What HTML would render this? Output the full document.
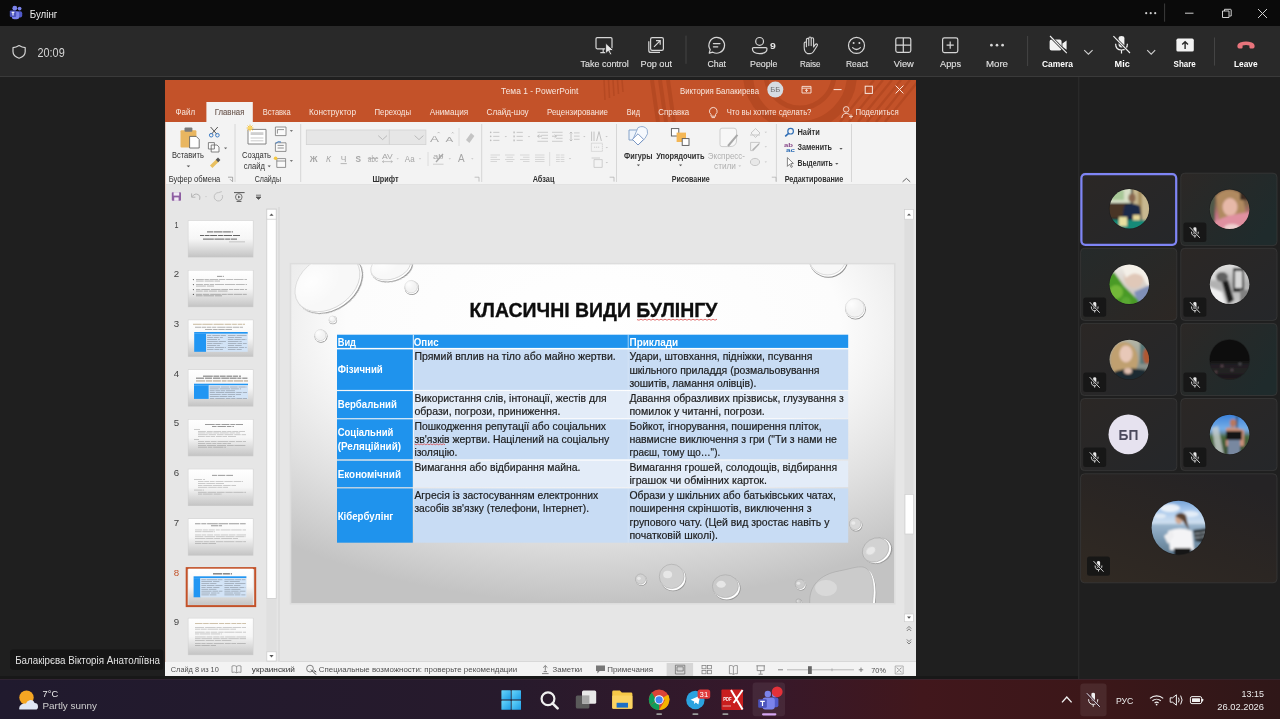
<!DOCTYPE html>
<html><head><meta charset="utf-8"><title>Teams</title>
<style>
html,body{margin:0;padding:0;background:#1f1f1f;width:1280px;height:719px;overflow:hidden}
svg{display:block;will-change:transform;font-family:"Liberation Sans",sans-serif}
</style></head><body>
<svg width="1280" height="719" viewBox="0 0 1280 719">
<defs>
<linearGradient id="tb" x1="0" y1="0" x2="1" y2="0"><stop offset="0" stop-color="#201a2e"/><stop offset="0.4" stop-color="#271a2c"/><stop offset="0.6" stop-color="#37182a"/><stop offset="0.72" stop-color="#41171c"/><stop offset="0.85" stop-color="#3c1719"/><stop offset="1" stop-color="#2f1718"/></linearGradient>
<clipPath id="tbclip"><rect x="165" y="80" width="751" height="42"/></clipPath>
<radialGradient id="slbg" cx="0.5" cy="0.12" r="0.95" fx="0.5" fy="0.1">
<stop offset="0" stop-color="#ffffff"/><stop offset="0.45" stop-color="#fbfbfb"/><stop offset="0.7" stop-color="#e0e0e0"/><stop offset="1" stop-color="#a8a8a8"/></radialGradient>
<linearGradient id="slbg2" x1="0" y1="0" x2="0" y2="1">
<stop offset="0" stop-color="#ffffff"/><stop offset="0.55" stop-color="#fdfdfd"/><stop offset="0.72" stop-color="#ececec"/><stop offset="1" stop-color="#bdbdbd"/></linearGradient>
<radialGradient id="slbg3" cx="0.5" cy="0.18" r="0.82"><stop offset="0" stop-color="#ffffff"/><stop offset="0.5" stop-color="#fcfcfc"/><stop offset="0.76" stop-color="#e0e0e0"/><stop offset="1" stop-color="#c3c3c3"/></radialGradient>
<clipPath id="slclip"><rect x="291.3" y="264.4" width="602.7" height="338.6"/></clipPath>
<radialGradient id="hl" cx="0.32" cy="0.3" r="0.45"><stop offset="0" stop-color="#ffffff" stop-opacity="0.85"/><stop offset="1" stop-color="#ffffff" stop-opacity="0"/></radialGradient>
<filter id="dsh" x="-30%" y="-30%" width="160%" height="160%"><feGaussianBlur stdDeviation="0.7"/></filter>
<linearGradient id="thbg" x1="0" y1="0" x2="0" y2="1">
<stop offset="0" stop-color="#ffffff"/><stop offset="0.5" stop-color="#f6f6f6"/><stop offset="1" stop-color="#c4c4c4"/></linearGradient>
<linearGradient id="tileA" x1="0" y1="0" x2="1" y2="1">
<stop offset="0" stop-color="#2b2725"/><stop offset="1" stop-color="#25272a"/></linearGradient>
<linearGradient id="tileB" x1="0" y1="0" x2="1" y2="0.6">
<stop offset="0" stop-color="#2c2826"/><stop offset="1" stop-color="#1f2b2c"/></linearGradient>
<linearGradient id="tileC" x1="0" y1="0" x2="1" y2="1">
<stop offset="0" stop-color="#252a2a"/><stop offset="1" stop-color="#2c2724"/></linearGradient>
<linearGradient id="tileBig" x1="0" y1="1" x2="0.7" y2="0">
<stop offset="0" stop-color="#312a23"/><stop offset="0.5" stop-color="#2b2623"/><stop offset="1" stop-color="#252325"/></linearGradient>
<filter id="avblur" x="-20%" y="-20%" width="140%" height="140%"><feGaussianBlur stdDeviation="1.0"/></filter>
<clipPath id="cl1"><circle cx="1129.3" cy="208.8" r="19.8"/></clipPath>
<linearGradient id="av1" x1="0" y1="0" x2="0" y2="1"><stop offset="0" stop-color="#3a3228"/><stop offset="0.5" stop-color="#2a241e"/><stop offset="0.8" stop-color="#1a3030"/><stop offset="1" stop-color="#158070"/></linearGradient>
<clipPath id="cl2"><circle cx="1229.6" cy="209.3" r="19.8"/></clipPath>
<linearGradient id="av2" x1="0" y1="0" x2="0" y2="1"><stop offset="0" stop-color="#5a4434"/><stop offset="0.4" stop-color="#8a6a50"/><stop offset="0.62" stop-color="#c07080"/><stop offset="1" stop-color="#e8a0b0"/></linearGradient>
<clipPath id="cl3"><circle cx="1129.3" cy="284.3" r="19.8"/></clipPath>
<linearGradient id="av3" x1="0" y1="0" x2="0" y2="1"><stop offset="0" stop-color="#f0f0ec"/><stop offset="0.5" stop-color="#d8d0c8"/><stop offset="1" stop-color="#b8b8c0"/></linearGradient>
<clipPath id="cl4"><circle cx="1229.6" cy="284.3" r="19.8"/></clipPath>
<linearGradient id="av4" x1="0" y1="0" x2="0" y2="1"><stop offset="0" stop-color="#e8e8e8"/><stop offset="0.5" stop-color="#b0b0b0"/><stop offset="1" stop-color="#d0d0d0"/></linearGradient>
<clipPath id="cl5"><circle cx="1129.3" cy="359.5" r="19.8"/></clipPath>
<linearGradient id="av5" x1="0" y1="0" x2="0" y2="1"><stop offset="0" stop-color="#b8b8a8"/><stop offset="0.5" stop-color="#9aa098"/><stop offset="1" stop-color="#607070"/></linearGradient>
<clipPath id="cl6"><circle cx="1229.6" cy="359.5" r="19.8"/></clipPath>
<linearGradient id="av6" x1="0" y1="0" x2="0" y2="1"><stop offset="0" stop-color="#0c0a0a"/><stop offset="0.55" stop-color="#0e0c0c"/><stop offset="1" stop-color="#241e22"/></linearGradient>
<clipPath id="cl7"><circle cx="1229.6" cy="434.5" r="19.8"/></clipPath>
<linearGradient id="av7" x1="0" y1="0" x2="0" y2="1"><stop offset="0" stop-color="#2f78d8"/><stop offset="0.38" stop-color="#78b0e8"/><stop offset="0.46" stop-color="#6a90b0"/><stop offset="0.55" stop-color="#48683c"/><stop offset="1" stop-color="#3a4a38"/></linearGradient>
<clipPath id="cl8"><circle cx="1178.5" cy="527.7" r="26.9"/></clipPath>
<linearGradient id="av8" x1="0" y1="0" x2="0" y2="1"><stop offset="0" stop-color="#6898d0"/><stop offset="0.2" stop-color="#a8c8ec"/><stop offset="0.42" stop-color="#d0e0f0"/><stop offset="0.455" stop-color="#9ab4cc"/><stop offset="0.7" stop-color="#7a98b0"/><stop offset="1" stop-color="#5a7488"/></linearGradient>
<linearGradient id="winlg" x1="0" y1="0" x2="1" y2="1"><stop offset="0" stop-color="#6ad8fb"/><stop offset="1" stop-color="#1c9ce6"/></linearGradient>
</defs>
<rect x="0" y="0" width="1280.00" height="719.00" fill="#1f1f1f" rx="0" />
<rect x="0" y="0" width="1280.00" height="26.00" fill="#0a0a0a" rx="0" />
<rect x="0" y="26" width="1280.00" height="50.00" fill="#292929" rx="0" />
<rect x="0" y="76" width="1280.00" height="1.00" fill="#3a3a3a" rx="0" />
<circle cx="19.6" cy="8.6" r="1.9" fill="#7b83eb" stroke="none" stroke-width="1" />
<rect x="16.5" y="11.2" width="5.70" height="6.30" fill="#5059c9" rx="2" />
<circle cx="14.8" cy="8.2" r="2.4" fill="#7b83eb" stroke="none" stroke-width="1" />
<rect x="11.8" y="11.2" width="7.40" height="8.00" fill="#7b83eb" rx="2.5" />
<rect x="9.8" y="10.6" width="6.40" height="6.40" fill="#4b53bc" rx="1" />
<path d="M11.6 12.3 H14.4 M13 12.3 V15.6" stroke="#ffffff" fill="none" stroke-width="1.1" />
<text x="29.7" y="18.2" font-size="11.5" fill="#ececec" font-weight="400" textLength="27.7" lengthAdjust="spacingAndGlyphs">Булінг</text>
<circle cx="1146.2" cy="13.2" r="1.1" fill="#cfcfcf" stroke="none" stroke-width="1" />
<circle cx="1150.7" cy="13.2" r="1.1" fill="#cfcfcf" stroke="none" stroke-width="1" />
<circle cx="1155.2" cy="13.2" r="1.1" fill="#cfcfcf" stroke="none" stroke-width="1" />
<line x1="1164.6" y1="3.5" x2="1164.6" y2="21.7" stroke="#3c3c3c" stroke-width="1" />
<line x1="1185" y1="13.2" x2="1193.5" y2="13.2" stroke="#cfcfcf" stroke-width="1" />
<path d="M1222.5 11 h6.5 v6.5 h-6.5 z M1224.5 11 v-1.7 h6 q0.7 0 0.7 0.7 v6 h-1.8" stroke="#cfcfcf" fill="none" stroke-width="1" stroke-linejoin="round"/>
<path d="M1258 9 L1267 18 M1267 9 L1258 18" stroke="#cfcfcf" fill="none" stroke-width="1" />
<path d="M19.1 45.6 C21.3 47.0 23.2 47.6 25.2 47.7 V51.8 C25.2 54.8 23.0 56.9 19.1 58.2 C15.2 56.9 13.0 54.8 13.0 51.8 V47.7 C15.0 47.6 16.9 47.0 19.1 45.6 Z" stroke="#d4d4d4" fill="none" stroke-width="1.2" stroke-linejoin="round"/>
<text x="37.5" y="57.2" font-size="13" fill="#d6d6d6" font-weight="400" textLength="27.2" lengthAdjust="spacingAndGlyphs">20:09</text>
<path d="M597.2 37.6 H610.8 Q612 37.6 612 38.8 V47.6 Q612 48.8 610.8 48.8 H597.2 Q596 48.8 596 47.6 V38.8 Q596 37.6 597.2 37.6 Z" stroke="#d6d6d6" fill="none" stroke-width="1.2" />
<path d="M603.2 48.8 V52.3 M600.3 52.6 H606" stroke="#d6d6d6" fill="none" stroke-width="1.2" />
<path d="M605.6 43.0 V53.8 L608.3 51.3 L610.1 54.9 L611.7 54.1 L609.9 50.6 L613.6 50.4 Z" stroke="#292929" fill="#e8e8e8" stroke-width="0.9" stroke-linejoin="round"/>
<text x="580.6" y="67.1" font-size="9.5" fill="#e0e0e0" font-weight="400" textLength="48.2" lengthAdjust="spacingAndGlyphs" stroke="#e0e0e0" stroke-width="0.12">Take control</text>
<path d="M652.2 37.6 H661.8 Q663.4 37.6 663.4 39.2 V48.8 Q663.4 50.4 661.8 50.4 H652.2 Q650.6 50.4 650.6 48.8 V39.2 Q650.6 37.6 652.2 37.6 Z" stroke="#d6d6d6" fill="none" stroke-width="1.2" />
<path d="M648.8 41.2 V50.4 Q648.8 52.4 650.8 52.4 H660" stroke="#d6d6d6" fill="none" stroke-width="1.2" />
<path d="M654 46.8 L660 40.8 M656 40.6 H660.2 V44.8" stroke="#d6d6d6" fill="none" stroke-width="1.2" />
<text x="640.6" y="67.1" font-size="9.5" fill="#e0e0e0" font-weight="400" textLength="31.4" lengthAdjust="spacingAndGlyphs" stroke="#e0e0e0" stroke-width="0.12">Pop out</text>
<line x1="686" y1="35.6" x2="686" y2="63.8" stroke="#444444" stroke-width="1" />
<path d="M716.6 37.4 A7.9 7.9 0 1 1 712.8 52.2 L709.2 53.2 L710.2 49.6 A7.9 7.9 0 0 1 716.6 37.4 Z" stroke="#d6d6d6" fill="none" stroke-width="1.2" stroke-linejoin="round"/>
<path d="M713.4 43.6 H720 M713.4 46.8 H717.8" stroke="#d6d6d6" fill="none" stroke-width="1.2" stroke-linecap="round"/>
<text x="707.5" y="67.1" font-size="9.5" fill="#e0e0e0" font-weight="400" textLength="18.5" lengthAdjust="spacingAndGlyphs" stroke="#e0e0e0" stroke-width="0.12">Chat</text>
<circle cx="759.6" cy="41.4" r="3.9" fill="none" stroke="#d6d6d6" stroke-width="1.2" />
<path d="M753.6 47.6 H765.8 Q767 47.6 767 48.8 Q767 53.6 759.7 53.6 Q752.4 53.6 752.4 48.8 Q752.4 47.6 753.6 47.6 Z" stroke="#d6d6d6" fill="none" stroke-width="1.2" />
<text x="770.0" y="48.8" font-size="9.6" fill="#e6e6e6" font-weight="700" textLength="5.8" lengthAdjust="spacingAndGlyphs">9</text>
<text x="750.0" y="67.1" font-size="9.5" fill="#e0e0e0" font-weight="400" textLength="27.5" lengthAdjust="spacingAndGlyphs" stroke="#e0e0e0" stroke-width="0.12">People</text>
<path d="M807.4 53.6 C804.8 52.4 804.2 49.6 804.2 47.2 V43.2 Q804.2 42 805.3 42 Q806.4 42 806.4 43.2 V46.8 V39.6 Q806.4 38.4 807.6 38.4 Q808.8 38.4 808.8 39.6 V45.6 V38.2 Q808.8 37 810 37 Q811.2 37 811.2 38.2 V45.6 V39 Q811.2 37.8 812.4 37.8 Q813.6 37.8 813.6 39 V47 L815.2 44.6 Q816.2 43.4 817.2 44.2 Q817.8 44.8 817.2 45.8 L813.4 51.8 Q812.2 53.6 810.2 53.6 Z" stroke="#d6d6d6" fill="none" stroke-width="1.1" stroke-linejoin="round"/>
<text x="800.0" y="67.1" font-size="9.5" fill="#e0e0e0" font-weight="400" textLength="20.6" lengthAdjust="spacingAndGlyphs" stroke="#e0e0e0" stroke-width="0.12">Raise</text>
<circle cx="856.5" cy="45.4" r="8.0" fill="none" stroke="#d6d6d6" stroke-width="1.2" />
<circle cx="853.6" cy="43.0" r="1.0" fill="#d6d6d6" stroke="none" stroke-width="1" />
<circle cx="859.4" cy="43.0" r="1.0" fill="#d6d6d6" stroke="none" stroke-width="1" />
<path d="M852.6 47.6 Q856.5 51.4 860.4 47.6" stroke="#d6d6d6" fill="none" stroke-width="1.2" stroke-linecap="round"/>
<text x="846.0" y="67.1" font-size="9.5" fill="#e0e0e0" font-weight="400" textLength="22.0" lengthAdjust="spacingAndGlyphs" stroke="#e0e0e0" stroke-width="0.12">React</text>
<path d="M897.6 37.8 H909 Q910.8 37.8 910.8 39.6 V50.6 Q910.8 52.4 909 52.4 H897.6 Q895.8 52.4 895.8 50.6 V39.6 Q895.8 37.8 897.6 37.8 Z M903.3 37.8 V52.4 M895.8 45.1 H910.8" stroke="#d6d6d6" fill="none" stroke-width="1.2" />
<text x="893.8" y="67.1" font-size="9.5" fill="#e0e0e0" font-weight="400" textLength="20.0" lengthAdjust="spacingAndGlyphs" stroke="#e0e0e0" stroke-width="0.12">View</text>
<path d="M944.4 37.8 H956 Q957.8 37.8 957.8 39.6 V50.8 Q957.8 52.6 956 52.6 H944.4 Q942.6 52.6 942.6 50.8 V39.6 Q942.6 37.8 944.4 37.8 Z M950.2 41.6 V48.8 M946.6 45.2 H953.8" stroke="#d6d6d6" fill="none" stroke-width="1.2" />
<text x="940.0" y="67.1" font-size="9.5" fill="#e0e0e0" font-weight="400" textLength="21.0" lengthAdjust="spacingAndGlyphs" stroke="#e0e0e0" stroke-width="0.12">Apps</text>
<circle cx="991.4" cy="45.2" r="1.35" fill="#d6d6d6" stroke="none" stroke-width="1" />
<circle cx="997" cy="45.2" r="1.35" fill="#d6d6d6" stroke="none" stroke-width="1" />
<circle cx="1002.6" cy="45.2" r="1.35" fill="#d6d6d6" stroke="none" stroke-width="1" />
<text x="986.0" y="67.1" font-size="9.5" fill="#e0e0e0" font-weight="400" textLength="22.0" lengthAdjust="spacingAndGlyphs" stroke="#e0e0e0" stroke-width="0.12">More</text>
<line x1="1027.6" y1="36" x2="1027.6" y2="66" stroke="#444444" stroke-width="1" />
<path d="M1051.6 39.6 H1059.6 Q1061.6 39.6 1061.6 41.6 V48.6 Q1061.6 50.6 1059.6 50.6 H1051.6 Q1049.6 50.6 1049.6 48.6 V41.6 Q1049.6 39.6 1051.6 39.6 Z M1062.4 43.4 L1066.6 40.4 V49.8 L1062.4 46.8 Z" stroke="none" fill="#f2f2f2" stroke-width="1" />
<line x1="1050" y1="36" x2="1066.8" y2="53.2" stroke="#292929" stroke-width="2.6" />
<line x1="1050" y1="36" x2="1066.8" y2="53.2" stroke="#f2f2f2" stroke-width="1.1" />
<path d="M1084.2 50.2 L1088.4 54.2 L1092.6 50.2" stroke="#cfcfcf" fill="none" stroke-width="1.1" />
<text x="1042.0" y="67.1" font-size="9.5" fill="#ffffff" font-weight="700" textLength="31.0" lengthAdjust="spacingAndGlyphs">Camera</text>
<path d="M1118.6 38.2 Q1118.6 36 1121.5 36 Q1124.4 36 1124.4 38.2 V44.6 Q1124.4 47.4 1121.5 47.4 Q1118.6 47.4 1118.6 44.6 Z" stroke="none" fill="#f2f2f2" stroke-width="1" />
<path d="M1115.6 43.8 Q1115.6 50 1121.5 50 Q1127.4 50 1127.4 43.8 M1121.5 50 V53.4" stroke="#f2f2f2" fill="none" stroke-width="1.2" />
<line x1="1113.4" y1="36.2" x2="1130" y2="53" stroke="#292929" stroke-width="2.6" />
<line x1="1113.4" y1="36.2" x2="1130" y2="53" stroke="#f2f2f2" stroke-width="1.1" />
<path d="M1147.2 50.2 L1151.2 54.2 L1155.2 50.2" stroke="#cfcfcf" fill="none" stroke-width="1.1" />
<text x="1114.6" y="67.1" font-size="9.5" fill="#ffffff" font-weight="700" textLength="15.2" lengthAdjust="spacingAndGlyphs">Mic</text>
<rect x="1176.4" y="38.6" width="17.40" height="13.00" fill="#f2f2f2" rx="1.6" />
<path d="M1185.1 49 V42 M1182.2 44.6 L1185.1 41.7 L1188 44.6" stroke="#292929" fill="none" stroke-width="1.4" />
<text x="1173.6" y="67.1" font-size="9.5" fill="#ffffff" font-weight="700" textLength="22.2" lengthAdjust="spacingAndGlyphs">Share</text>
<line x1="1214.5" y1="37.5" x2="1214.5" y2="65.6" stroke="#444444" stroke-width="1" />
<path d="M1237.4 46.8 Q1237 44 1240.2 42.6 Q1246 40.2 1251.8 42.6 Q1255 44 1254.6 46.8 Q1254.4 48.4 1253 48.6 L1250.6 48.6 Q1249.4 48.4 1249.4 47.2 V45.6 Q1246 44.6 1242.6 45.6 V47.2 Q1242.6 48.4 1241.4 48.6 L1239 48.6 Q1237.6 48.4 1237.4 46.8 Z" stroke="none" fill="#e8747c" stroke-width="1" />
<text x="1234.0" y="67.1" font-size="9.5" fill="#ffffff" font-weight="700" textLength="23.6" lengthAdjust="spacingAndGlyphs">Leave</text>
<line x1="1078.8" y1="77" x2="1078.8" y2="679" stroke="#2e2e2e" stroke-width="1" />
<rect x="0" y="676" width="1078.00" height="3.00" fill="#181818" rx="0" />
<rect x="10" y="649.4" width="153.30" height="20.40" fill="#151515" rx="3" />
<text x="15.2" y="664.4" font-size="11.2" fill="#e2e2e2" font-weight="400" textLength="144.8" lengthAdjust="spacingAndGlyphs">Балакірєва Вікторія Анатоліївна</text>
<rect x="0" y="679" width="1280.00" height="40.00" fill="url(#tb)" rx="0" />
<rect x="0" y="679" width="1280.00" height="1.00" fill="#3a2a35" rx="0" opacity="0.6"/>
<rect x="165" y="80" width="751.00" height="596.00" fill="#e6e6e6" rx="0" />
<rect x="165" y="80" width="751.00" height="42.00" fill="#c35229" rx="0" />
<g clip-path="url(#tbclip)" opacity="0.45" fill="none" stroke="#a63f1a">
<circle cx="800" cy="74" r="52" stroke-width="10"/>
<circle cx="800" cy="74" r="34" stroke-width="5"/>
<line x1="604.0" y1="80" x2="605.0" y2="100" stroke-width="1.6"/>
<line x1="608.5" y1="80" x2="609.5" y2="98" stroke-width="1.6"/>
<line x1="613.0" y1="80" x2="614.0" y2="96" stroke-width="1.6"/>
<line x1="617.5" y1="80" x2="618.5" y2="94" stroke-width="1.6"/>
<line x1="622.0" y1="80" x2="623.0" y2="92" stroke-width="1.6"/>
<line x1="652" y1="80" x2="658" y2="122" stroke-width="4"/>
<line x1="660" y1="80" x2="666" y2="122" stroke-width="4"/>
<line x1="668" y1="80" x2="674" y2="122" stroke-width="4"/>
<line x1="840" y1="122" x2="874" y2="80" stroke-width="2.5"/>
<line x1="849" y1="122" x2="883" y2="80" stroke-width="2.5"/>
<line x1="858" y1="122" x2="892" y2="80" stroke-width="2.5"/>
<line x1="867" y1="122" x2="901" y2="80" stroke-width="2.5"/>
<line x1="876" y1="122" x2="910" y2="80" stroke-width="2.5"/>
<line x1="885" y1="122" x2="919" y2="80" stroke-width="2.5"/>
</g>
<text x="501.0" y="94.0" font-size="9.7" fill="#f8e7df" font-weight="400" textLength="77.4" lengthAdjust="spacingAndGlyphs">Тема 1  -  PowerPoint</text>
<text x="680.0" y="94.0" font-size="9.7" fill="#f8e7df" font-weight="400" textLength="79.0" lengthAdjust="spacingAndGlyphs">Виктория Балакирева</text>
<circle cx="775.3" cy="89.6" r="8" fill="#d6dce2" stroke="none" stroke-width="1" />
<text x="770.2" y="92.2" font-size="6.4" fill="#6e6e6e" font-weight="400" textLength="10.2" lengthAdjust="spacingAndGlyphs">ББ</text>
<path d="M802 86.4 H811 V93 H802 Z M802 88.2 H811 M806.5 92 V89.4 M805 90.8 L806.5 89.4 L808 90.8" stroke="#f8e7df" fill="none" stroke-width="0.9" />
<line x1="833.6" y1="89.6" x2="841.6" y2="89.6" stroke="#f8e7df" stroke-width="1" />
<rect x="865.2" y="86.2" width="7.20" height="7.20" fill="none" rx="0" stroke="#f8e7df" stroke-width="1"/>
<path d="M895.6 85.6 L903.4 93.4 M903.4 85.6 L895.6 93.4" stroke="#f8e7df" fill="none" stroke-width="1" />
<rect x="206.4" y="102" width="46.40" height="20.00" fill="#f3f3f3" rx="0" />
<text x="175.6" y="115.1" font-size="9.3" fill="#f8e7df" font-weight="400" textLength="19.4" lengthAdjust="spacingAndGlyphs">Файл</text>
<text x="262.7" y="115.1" font-size="9.3" fill="#f8e7df" font-weight="400" textLength="28.1" lengthAdjust="spacingAndGlyphs">Вставка</text>
<text x="309.0" y="115.1" font-size="9.3" fill="#f8e7df" font-weight="400" textLength="47.0" lengthAdjust="spacingAndGlyphs">Конструктор</text>
<text x="374.5" y="115.1" font-size="9.3" fill="#f8e7df" font-weight="400" textLength="36.5" lengthAdjust="spacingAndGlyphs">Переходы</text>
<text x="429.8" y="115.1" font-size="9.3" fill="#f8e7df" font-weight="400" textLength="38.5" lengthAdjust="spacingAndGlyphs">Анимация</text>
<text x="486.5" y="115.1" font-size="9.3" fill="#f8e7df" font-weight="400" textLength="42.2" lengthAdjust="spacingAndGlyphs">Слайд-шоу</text>
<text x="547.0" y="115.1" font-size="9.3" fill="#f8e7df" font-weight="400" textLength="61.0" lengthAdjust="spacingAndGlyphs">Рецензирование</text>
<text x="626.7" y="115.1" font-size="9.3" fill="#f8e7df" font-weight="400" textLength="13.3" lengthAdjust="spacingAndGlyphs">Вид</text>
<text x="658.3" y="115.1" font-size="9.3" fill="#f8e7df" font-weight="400" textLength="30.9" lengthAdjust="spacingAndGlyphs">Справка</text>
<text x="726.7" y="115.1" font-size="9.3" fill="#f8e7df" font-weight="400" textLength="84.7" lengthAdjust="spacingAndGlyphs">Что вы хотите сделать?</text>
<text x="855.6" y="115.1" font-size="9.3" fill="#f8e7df" font-weight="400" textLength="43.1" lengthAdjust="spacingAndGlyphs">Поделиться</text>
<text x="214.7" y="115.1" font-size="9.3" fill="#6e5a52" font-weight="400" textLength="29.7" lengthAdjust="spacingAndGlyphs" stroke="#6e5a52" stroke-width="0.15">Главная</text>
<path d="M713.3 107.4 A3.9 3.9 0 0 1 715.6 114.4 V116.2 H711 V114.4 A3.9 3.9 0 0 1 713.3 107.4 Z M711.6 117.6 H715" stroke="#f8e7df" fill="none" stroke-width="0.9" />
<circle cx="846.2" cy="109.4" r="2.8" fill="none" stroke="#f8e7df" stroke-width="0.9" />
<path d="M841.8 118 Q842.4 113.4 846.2 113.4 Q848.4 113.4 849.6 114.8 M849 116.4 H853 M851 114.4 V118.4" stroke="#f8e7df" fill="none" stroke-width="0.9" />
<rect x="165" y="122" width="751.00" height="62.00" fill="#f3f3f3" rx="0" />
<rect x="165" y="184" width="751.00" height="1.00" fill="#e2e2e2" rx="0" />
<line x1="235" y1="124" x2="235" y2="182" stroke="#d6d6d6" stroke-width="1" />
<line x1="300.7" y1="124" x2="300.7" y2="182" stroke="#d6d6d6" stroke-width="1" />
<line x1="481.7" y1="124" x2="481.7" y2="182" stroke="#d6d6d6" stroke-width="1" />
<line x1="616.5" y1="124" x2="616.5" y2="182" stroke="#d6d6d6" stroke-width="1" />
<line x1="776.4" y1="124" x2="776.4" y2="182" stroke="#d6d6d6" stroke-width="1" />
<line x1="851.5" y1="124" x2="851.5" y2="182" stroke="#d6d6d6" stroke-width="1" />
<rect x="180.5" y="130.2" width="15.90" height="17.20" fill="#e9b660" rx="1" />
<rect x="184.5" y="127.6" width="7.90" height="4.20" fill="#7a7a7a" rx="1" />
<path d="M189.6 136.4 H196.2 L199.2 139.4 V148 H189.6 Z" stroke="#555555" fill="#ffffff" stroke-width="0.8" />
<text x="172.0" y="158.4" font-size="8.2" fill="#303030" font-weight="400" textLength="31.8" lengthAdjust="spacingAndGlyphs">Вставить</text>
<path d="M186.6 165.4 L188.4 167.2 L190.2 165.4 Z" stroke="none" fill="#555" stroke-width="1" />
<path d="M210.6 127 L216.8 134.2 M217.8 127 L211.4 134.2" stroke="#555" fill="none" stroke-width="1" />
<circle cx="211.2" cy="135.2" r="1.8" fill="none" stroke="#3b7bc4" stroke-width="1" />
<circle cx="217.4" cy="135.2" r="1.8" fill="none" stroke="#3b7bc4" stroke-width="1" />
<path d="M208.4 142.6 H214.4 V149 H208.4 Z M211.2 145 H217 L219 147 V152 H211.2 Z" stroke="#666" fill="#fbfbfb" stroke-width="0.8" />
<path d="M224 147.6 L225.6 149.2 L227.2 147.6 Z" stroke="none" fill="#666" stroke-width="1" />
<path d="M210 165.6 L216.6 159 L219 161.4 L212.4 168 Z" stroke="none" fill="#e9c060" stroke-width="1" />
<path d="M215.8 159.8 L218 157.6 L220.4 160 L218.2 162.2 Z" stroke="none" fill="#555" stroke-width="1" />
<text x="168.8" y="182.4" font-size="8.2" fill="#303030" font-weight="400" textLength="51.5" lengthAdjust="spacingAndGlyphs">Буфер обмена</text>
<path d="M228 177.2 H232.6 V181.8 M230 179.2 L232.4 181.6" stroke="#888" fill="none" stroke-width="0.7" />
<path d="M248 129.4 H266 V144 H248 Z" stroke="#777" fill="#ffffff" stroke-width="0.9" />
<rect x="250.6" y="132.2" width="12.80" height="2.80" fill="#cfcfcf" rx="0" />
<rect x="250.6" y="137.4" width="12.80" height="1.20" fill="#d2d2d2" rx="0" />
<rect x="250.6" y="140.2" width="12.80" height="1.20" fill="#d2d2d2" rx="0" />
<path d="M250 124.6 V131.4 M246.6 128 H253.4 M247.6 125.6 L252.4 130.4 M252.4 125.6 L247.6 130.4" stroke="#f5c040" fill="none" stroke-width="1" />
<circle cx="250" cy="128" r="1.8" fill="#fbd860" stroke="none" stroke-width="1" />
<text x="242.0" y="158.4" font-size="8.2" fill="#303030" font-weight="400" textLength="29.0" lengthAdjust="spacingAndGlyphs">Создать</text>
<text x="243.8" y="168.8" font-size="8.2" fill="#303030" font-weight="400" textLength="21.2" lengthAdjust="spacingAndGlyphs">слайд</text>
<path d="M267.6 165.6 L269.2 167.2 L270.8 165.6 Z" stroke="none" fill="#555" stroke-width="1" />
<path d="M275.4 127 H286 V135.6 H275.4 Z M277.4 129.6 H284 M277.4 129.6 V133.6" stroke="#777" fill="#fafafa" stroke-width="0.8" />
<path d="M289.8 130.2 L291.4 131.8 L293 130.2 Z" stroke="none" fill="#555" stroke-width="1" />
<path d="M275.4 142.8 H286 V151.4 H275.4 Z M277.6 145.4 H283.8 M277.6 148 H283.8" stroke="#777" fill="#fafafa" stroke-width="0.8" />
<path d="M275.6 143.6 Q278 140.6 281 142" stroke="#3b7bc4" fill="none" stroke-width="1" />
<path d="M276.8 158.6 H285.6 V167.4 H276.8 Z M276.8 161 H285.6" stroke="#777" fill="#fafafa" stroke-width="0.8" />
<circle cx="275.6" cy="158.2" r="1.8" fill="#f5c842" stroke="none" stroke-width="1" />
<path d="M289.8 160.2 L291.4 161.8 L293 160.2 Z" stroke="none" fill="#555" stroke-width="1" />
<text x="254.7" y="182.4" font-size="8.2" fill="#303030" font-weight="400" textLength="26.3" lengthAdjust="spacingAndGlyphs">Слайды</text>
<rect x="306.3" y="130" width="83.00" height="14.60" fill="#e6e6e6" rx="0" stroke="#d2d2d2" stroke-width="0.8"/>
<rect x="389.3" y="130" width="36.60" height="14.60" fill="#e6e6e6" rx="0" stroke="#d2d2d2" stroke-width="0.8"/>
<path d="M378.2 135.6 L382.6 139.6 L387 135.6" stroke="#b4b4b4" fill="none" stroke-width="0.9" />
<path d="M414.6 135.6 L419 139.6 L423.4 135.6" stroke="#b4b4b4" fill="none" stroke-width="0.9" />
<text x="430.0" y="142.0" font-size="9.6" fill="#a6a6a6" font-weight="400" textLength="9.0" lengthAdjust="spacingAndGlyphs">A</text>
<text x="445.6" y="142.0" font-size="7.8" fill="#a6a6a6" font-weight="400" textLength="7.7" lengthAdjust="spacingAndGlyphs">A</text>
<path d="M437.6 133.2 l1 -1.2 l1 1.2 M451.8 133.4 l0.9 -1.1 l0.9 1.1" stroke="#a6a6a6" fill="none" stroke-width="0.6" />
<line x1="459" y1="128" x2="459" y2="146" stroke="#dcdcdc" stroke-width="1" />
<path d="M466 140 L471 133 L474.4 136 L469.4 143 Z" stroke="none" fill="#c4c4c4" stroke-width="1" />
<text x="309.8" y="161.6" font-size="9.6" fill="#a6a6a6" font-weight="700" font-style="normal" textLength="7.800000000000011" lengthAdjust="spacingAndGlyphs">Ж</text>
<text x="326" y="161.6" font-size="9.6" fill="#a6a6a6" font-weight="400" font-style="italic" textLength="5" lengthAdjust="spacingAndGlyphs">К</text>
<text x="340.8" y="161.6" font-size="9.6" fill="#a6a6a6" font-weight="400" font-style="normal" textLength="5.599999999999966" lengthAdjust="spacingAndGlyphs">Ч</text>
<text x="355.5" y="161.6" font-size="9.6" fill="#a6a6a6" font-weight="700" font-style="normal" textLength="5.5" lengthAdjust="spacingAndGlyphs">S</text>
<text x="368" y="161.6" font-size="9.6" fill="#a6a6a6" font-weight="400" font-style="normal" textLength="10" lengthAdjust="spacingAndGlyphs">abc</text>
<text x="404.8" y="161.6" font-size="9.6" fill="#a6a6a6" font-weight="400" font-style="normal" textLength="9.800000000000011" lengthAdjust="spacingAndGlyphs">Aa</text>
<line x1="340.6" y1="163.6" x2="346.8" y2="163.6" stroke="#a6a6a6" stroke-width="0.8" />
<line x1="367.8" y1="158.4" x2="378.2" y2="158.4" stroke="#a6a6a6" stroke-width="0.7" />
<text x="382.0" y="158.6" font-size="7.2" fill="#a6a6a6" font-weight="400" textLength="10.8" lengthAdjust="spacingAndGlyphs">AV</text>
<path d="M382.4 161.6 H392.4 M384 160.4 L382.4 161.6 L384 162.8 M390.8 160.4 L392.4 161.6 L390.8 162.8" stroke="#a6a6a6" fill="none" stroke-width="0.6" />
<path d="M396.5 158.2 L397.7 159.4 L398.9 158.2 Z" stroke="none" fill="#c0c0c0" stroke-width="1" />
<path d="M418.8 158.2 L420 159.4 L421.2 158.2 Z" stroke="none" fill="#c0c0c0" stroke-width="1" />
<path d="M448.6 158.2 L449.8 159.4 L451.0 158.2 Z" stroke="none" fill="#c0c0c0" stroke-width="1" />
<path d="M471.1 158.2 L472.3 159.4 L473.5 158.2 Z" stroke="none" fill="#c0c0c0" stroke-width="1" />
<line x1="428" y1="152" x2="428" y2="166" stroke="#dcdcdc" stroke-width="1" />
<text x="433.0" y="158.6" font-size="7" fill="#a6a6a6" font-weight="400" textLength="10.5" lengthAdjust="spacingAndGlyphs">ab</text>
<path d="M436 162 L443 154" stroke="#a6a6a6" fill="none" stroke-width="1.4" />
<rect x="433" y="163.6" width="10.50" height="1.40" fill="#d8d8d8" rx="0" />
<text x="458.0" y="162.4" font-size="10" fill="#a6a6a6" font-weight="400" textLength="6.6" lengthAdjust="spacingAndGlyphs">A</text>
<text x="372.4" y="181.9" font-size="8.2" fill="#303030" font-weight="700" textLength="26.1" lengthAdjust="spacingAndGlyphs">Шрифт</text>
<path d="M474.6 177.2 H479 V181.6" stroke="#aaa" fill="none" stroke-width="0.7" />
<circle cx="490.7" cy="132.4" r="0.8" fill="#bdbdbd" stroke="none" stroke-width="1" />
<rect x="493.2" y="131.8" width="6.20" height="1.20" fill="#cfcfcf" rx="0" />
<circle cx="490.7" cy="136.4" r="0.8" fill="#bdbdbd" stroke="none" stroke-width="1" />
<rect x="493.2" y="135.8" width="6.20" height="1.20" fill="#cfcfcf" rx="0" />
<circle cx="490.7" cy="140.4" r="0.8" fill="#bdbdbd" stroke="none" stroke-width="1" />
<rect x="493.2" y="139.8" width="6.20" height="1.20" fill="#cfcfcf" rx="0" />
<rect x="513.4" y="131.5" width="1.40" height="1.80" fill="#bdbdbd" rx="0" />
<rect x="516.6" y="131.8" width="6.20" height="1.20" fill="#cfcfcf" rx="0" />
<rect x="513.4" y="135.5" width="1.40" height="1.80" fill="#bdbdbd" rx="0" />
<rect x="516.6" y="135.8" width="6.20" height="1.20" fill="#cfcfcf" rx="0" />
<rect x="513.4" y="139.5" width="1.40" height="1.80" fill="#bdbdbd" rx="0" />
<rect x="516.6" y="139.8" width="6.20" height="1.20" fill="#cfcfcf" rx="0" />
<path d="M504.6 136 L505.8 137.2 L507.0 136 Z" stroke="none" fill="#c4c4c4" stroke-width="1" />
<path d="M527.8 136 L529 137.2 L530.2 136 Z" stroke="none" fill="#c4c4c4" stroke-width="1" />
<path d="M583.0999999999999 136 L584.3 137.2 L585.5 136 Z" stroke="none" fill="#c4c4c4" stroke-width="1" />
<path d="M605.4 136 L606.6 137.2 L607.8000000000001 136 Z" stroke="none" fill="#c4c4c4" stroke-width="1" />
<rect x="537.4" y="131.8" width="10.60" height="1.00" fill="#cdcdcd" rx="0" />
<rect x="541.4" y="134.8" width="6.60" height="1.00" fill="#cdcdcd" rx="0" />
<rect x="541.4" y="137.8" width="6.60" height="1.00" fill="#cdcdcd" rx="0" />
<rect x="537.4" y="140.8" width="10.60" height="1.00" fill="#cdcdcd" rx="0" />
<rect x="552" y="131.8" width="10.60" height="1.00" fill="#cdcdcd" rx="0" />
<rect x="556" y="134.8" width="6.60" height="1.00" fill="#cdcdcd" rx="0" />
<rect x="556" y="137.8" width="6.60" height="1.00" fill="#cdcdcd" rx="0" />
<rect x="552" y="140.8" width="10.60" height="1.00" fill="#cdcdcd" rx="0" />
<path d="M542 136.2 L537.6 136.2 M539.4 134.6 L537.6 136.2 L539.4 137.8" stroke="#b8b8b8" fill="none" stroke-width="0.8" />
<path d="M552 136.2 L556.4 136.2 M554.6 134.6 L556.4 136.2 L554.6 137.8" stroke="#b8b8b8" fill="none" stroke-width="0.8" />
<path d="M571 132 V141 M569.6 133.4 L571 132 L572.4 133.4 M569.6 139.6 L571 141 L572.4 139.6" stroke="#b8b8b8" fill="none" stroke-width="0.8" />
<rect x="574" y="132.4" width="5.60" height="1.00" fill="#cdcdcd" rx="0" />
<rect x="574" y="135.6" width="5.60" height="1.00" fill="#cdcdcd" rx="0" />
<rect x="574" y="138.8" width="5.60" height="1.00" fill="#cdcdcd" rx="0" />
<path d="M591.6 141 V131.6 M594 141 V131.6 M596.6 141 L599 131.6 L601.4 141" stroke="#bdbdbd" fill="none" stroke-width="0.9" />
<rect x="490.5" y="154.6" width="9.50" height="0.80" fill="#d0d0d0" rx="0" />
<rect x="490.5" y="156.79999999999998" width="6.50" height="0.80" fill="#d0d0d0" rx="0" />
<rect x="490.5" y="159.0" width="9.50" height="0.80" fill="#d0d0d0" rx="0" />
<rect x="490.5" y="161.2" width="6.50" height="0.80" fill="#d0d0d0" rx="0" />
<rect x="505.0" y="154.6" width="9.50" height="0.80" fill="#d0d0d0" rx="0" />
<rect x="506.5" y="156.79999999999998" width="6.50" height="0.80" fill="#d0d0d0" rx="0" />
<rect x="505.0" y="159.0" width="9.50" height="0.80" fill="#d0d0d0" rx="0" />
<rect x="506.5" y="161.2" width="6.50" height="0.80" fill="#d0d0d0" rx="0" />
<rect x="520.0" y="154.6" width="9.50" height="0.80" fill="#d0d0d0" rx="0" />
<rect x="523.0" y="156.79999999999998" width="6.50" height="0.80" fill="#d0d0d0" rx="0" />
<rect x="520.0" y="159.0" width="9.50" height="0.80" fill="#d0d0d0" rx="0" />
<rect x="523.0" y="161.2" width="6.50" height="0.80" fill="#d0d0d0" rx="0" />
<rect x="535" y="154.6" width="9.50" height="0.80" fill="#d0d0d0" rx="0" />
<rect x="535" y="156.79999999999998" width="9.50" height="0.80" fill="#d0d0d0" rx="0" />
<rect x="535" y="159.0" width="9.50" height="0.80" fill="#d0d0d0" rx="0" />
<rect x="535" y="161.2" width="9.50" height="0.80" fill="#d0d0d0" rx="0" />
<line x1="549.7" y1="152" x2="549.7" y2="166" stroke="#dcdcdc" stroke-width="1" />
<rect x="556.0" y="154.6" width="3.80" height="0.80" fill="#d0d0d0" rx="0" />
<rect x="556.0" y="156.79999999999998" width="3.80" height="0.80" fill="#d0d0d0" rx="0" />
<rect x="556.0" y="159.0" width="3.80" height="0.80" fill="#d0d0d0" rx="0" />
<rect x="556.0" y="161.2" width="3.80" height="0.80" fill="#d0d0d0" rx="0" />
<rect x="560.6" y="154.6" width="3.80" height="0.80" fill="#d0d0d0" rx="0" />
<rect x="560.6" y="156.79999999999998" width="3.80" height="0.80" fill="#d0d0d0" rx="0" />
<rect x="560.6" y="159.0" width="3.80" height="0.80" fill="#d0d0d0" rx="0" />
<rect x="560.6" y="161.2" width="3.80" height="0.80" fill="#d0d0d0" rx="0" />
<path d="M568.8 158 L570 159.2 L571.2 158 Z" stroke="none" fill="#c4c4c4" stroke-width="1" />
<path d="M591.4 143.2 H602.4 V151.4 H591.4 Z M594 147.2 H600" stroke="#c4c4c4" fill="none" stroke-width="0.8" stroke-dasharray="1.2 0.8"/>
<path d="M605.6 147 L606.8 148.2 L608 147 Z" stroke="none" fill="#c4c4c4" stroke-width="1" />
<path d="M594 159.6 H602.2 V167.4 H594 Z M591.6 158 H600" stroke="#c4c4c4" fill="none" stroke-width="0.8" />
<path d="M605.6 162 L606.8 163.2 L608 162 Z" stroke="none" fill="#c4c4c4" stroke-width="1" />
<text x="532.7" y="182.0" font-size="8.2" fill="#303030" font-weight="700" textLength="21.7" lengthAdjust="spacingAndGlyphs">Абзац</text>
<path d="M609.6 177.2 H614 V181.6" stroke="#aaa" fill="none" stroke-width="0.7" />
<path d="M629 130 L638.4 130 L638.4 140 L629 140 Z" stroke="#7b9bc4" fill="#eef4fb" stroke-width="0.9" />
<path d="M638 127.6 Q643.6 124.8 647.2 129.4 Q649 133.6 645 138.4 L638 145 L632.8 139.8 Z" stroke="#8aa6cc" fill="#f6f9fd" stroke-width="0.9" />
<path d="M638 133.8 L643.6 139.4 L638 145 L632.4 139.4 Z" stroke="#6f8fbf" fill="#ffffff" stroke-width="0.9" />
<text x="624.0" y="158.8" font-size="8.2" fill="#303030" font-weight="700" textLength="28.4" lengthAdjust="spacingAndGlyphs">Фигуры</text>
<path d="M636.8 164.6 L638.4 166.2 L640 164.6 Z" stroke="none" fill="#555" stroke-width="1" />
<rect x="671.4" y="128.6" width="7.40" height="7.40" fill="#ffffff" rx="0" stroke="#555" stroke-width="0.9"/>
<rect x="676.6" y="132.6" width="9.40" height="9.40" fill="#f4b755" rx="0" />
<rect x="682.2" y="138.6" width="6.80" height="6.80" fill="#ffffff" rx="0" stroke="#555" stroke-width="0.9"/>
<text x="656.2" y="158.8" font-size="8.2" fill="#303030" font-weight="700" textLength="48.4" lengthAdjust="spacingAndGlyphs">Упорядочить</text>
<path d="M679 164.6 L680.6 166.2 L682.2 164.6 Z" stroke="none" fill="#555" stroke-width="1" />
<path d="M720 130 Q720 128.2 722 128.2 H734 Q736.6 128.2 736.6 131 V140 Q736.6 146.6 730 146.6 H722 Q720 146.6 720 144.6 Z" stroke="#c8c8c8" fill="#f7f7f7" stroke-width="0.9" />
<path d="M728 146 L737.4 134.8" stroke="#a8a8a8" fill="none" stroke-width="2" />
<text x="707.8" y="158.8" font-size="8.2" fill="#b0b0b0" font-weight="400" textLength="37.2" lengthAdjust="spacingAndGlyphs">Экспресс-</text>
<text x="714.0" y="169.2" font-size="8.2" fill="#b0b0b0" font-weight="400" textLength="22.0" lengthAdjust="spacingAndGlyphs">стили</text>
<path d="M738.4 165.4 L739.8 166.8 L741.2 165.4 Z" stroke="none" fill="#bbb" stroke-width="1" />
<path d="M751 133 L755.6 128.6 L760 133 L755.6 137.4 Z" stroke="#bdbdbd" fill="#f4f4f4" stroke-width="0.8" />
<rect x="750" y="134.4" width="10.00" height="1.20" fill="#d0d0d0" rx="0" />
<path d="M750.6 142.4 H759.6 L759.6 143 L753.4 150.6 H750.6 Z" stroke="#bdbdbd" fill="none" stroke-width="0.8" />
<path d="M752.6 150 L759 144" stroke="#b0b0b0" fill="none" stroke-width="1.2" />
<ellipse cx="755" cy="162" rx="4.6" ry="3.6" fill="#e8e8e8" stroke="#bdbdbd" stroke-width="0.8"/>
<path d="M764.6 131.8 L765.8 133.0 L767 131.8 Z" stroke="none" fill="#c4c4c4" stroke-width="1" />
<path d="M764.6 146.20000000000002 L765.8 147.4 L767 146.20000000000002 Z" stroke="none" fill="#c4c4c4" stroke-width="1" />
<path d="M764.6 161.6 L765.8 162.79999999999998 L767 161.6 Z" stroke="none" fill="#c4c4c4" stroke-width="1" />
<text x="671.7" y="181.9" font-size="8.2" fill="#303030" font-weight="700" textLength="38.0" lengthAdjust="spacingAndGlyphs">Рисование</text>
<path d="M771.8 177.2 H776 V181.6" stroke="#aaa" fill="none" stroke-width="0.7" />
<circle cx="790.6" cy="131.2" r="2.8" fill="none" stroke="#2f6eb5" stroke-width="1.2" />
<line x1="788.6" y1="133.4" x2="785.2" y2="136.4" stroke="#2f6eb5" stroke-width="1.6" />
<text x="797.5" y="135.4" font-size="8.2" fill="#303030" font-weight="700" textLength="22.3" lengthAdjust="spacingAndGlyphs">Найти</text>
<text x="784.0" y="146.6" font-size="6" fill="#8a4a8a" font-weight="700" textLength="9.0" lengthAdjust="spacingAndGlyphs">ab</text>
<text x="786.0" y="151.6" font-size="6" fill="#2f6eb5" font-weight="700" textLength="9.0" lengthAdjust="spacingAndGlyphs">ac</text>
<text x="797.5" y="150.4" font-size="8.2" fill="#303030" font-weight="700" textLength="34.5" lengthAdjust="spacingAndGlyphs">Заменить</text>
<path d="M839.4 148.0 L841 149.8 L842.6 148.0 Z" stroke="none" fill="#555" stroke-width="1" />
<path d="M787.4 157.6 L787.4 166.4 L789.6 164.2 L791.2 167.4 L792.4 166.8 L790.8 163.6 L793.4 163.4 Z" stroke="#555" fill="#ffffff" stroke-width="0.7" />
<text x="797.5" y="165.8" font-size="8.2" fill="#303030" font-weight="700" textLength="35.2" lengthAdjust="spacingAndGlyphs">Выделить</text>
<path d="M835.2 163.0 L836.8 164.8 L838.4 163.0 Z" stroke="none" fill="#555" stroke-width="1" />
<text x="784.7" y="181.6" font-size="8.2" fill="#303030" font-weight="700" textLength="58.6" lengthAdjust="spacingAndGlyphs">Редактирование</text>
<path d="M902.6 181.8 L906.4 178.4 L910.2 181.8" stroke="#555" fill="none" stroke-width="0.9" />
<rect x="165" y="185" width="751.00" height="22.00" fill="#e6e6e6" rx="0" />
<rect x="171.8" y="192.2" width="9.20" height="8.60" fill="#8e5ea2" rx="0.8" />
<rect x="173.6" y="192.2" width="5.60" height="3.40" fill="#f0eaf4" rx="0" />
<rect x="174.2" y="197.4" width="4.40" height="3.40" fill="#f0eaf4" rx="0" />
<path d="M192 196.8 Q194.8 192.6 198.6 194.8 Q200.8 196.4 199.6 199.8 M191.6 193.4 V197.2 H195.4" stroke="#b4b4b4" fill="none" stroke-width="1" />
<path d="M205 196.2 L206 197.2 L207 196.2 Z" stroke="none" fill="#c0c0c0" stroke-width="1" />
<path d="M222.2 195 A4.2 4.2 0 1 1 218.6 192.6 M218.6 192.6 L221.8 191.6" stroke="#c0c0c0" fill="none" stroke-width="1" />
<line x1="234" y1="192.6" x2="244.6" y2="192.6" stroke="#555" stroke-width="1" />
<circle cx="238.8" cy="197" r="3.3" fill="none" stroke="#666" stroke-width="0.9" />
<path d="M238 195.6 L240.6 197 L238 198.4 Z" stroke="none" fill="#666" stroke-width="1" />
<line x1="236.6" y1="201.4" x2="241.4" y2="201.4" stroke="#555" stroke-width="1" />
<path d="M256 195.2 H261 M256 197 L258.5 199.4 L261 197 Z" stroke="#555" fill="#555" stroke-width="0.8" />
<line x1="165.5" y1="122" x2="165.5" y2="676" stroke="#e6c8bc" stroke-width="1" />
<rect x="266.3" y="208.8" width="10.40" height="453.20" fill="#e0e0e0" rx="0" />
<rect x="266.8" y="209.2" width="9.40" height="389.20" fill="#ffffff" rx="0" stroke="#cfcfcf" stroke-width="0.8"/>
<rect x="266.8" y="209.2" width="9.40" height="10.00" fill="#ffffff" rx="0" stroke="#cfcfcf" stroke-width="0.8"/>
<path d="M269.4 215.8 L271.5 213.4 L273.6 215.8 Z" stroke="none" fill="#555" stroke-width="1" />
<rect x="266.8" y="651.8" width="9.40" height="9.20" fill="#ffffff" rx="0" stroke="#cfcfcf" stroke-width="0.8"/>
<path d="M269.4 655 L271.5 657.4 L273.6 655 Z" stroke="none" fill="#555" stroke-width="1" />
<line x1="279" y1="207" x2="279" y2="662" stroke="#d4d4d4" stroke-width="1" />
<rect x="165" y="662" width="751.00" height="14.00" fill="#f3f3f3" rx="0" />
<line x1="280" y1="661.5" x2="916" y2="661.5" stroke="#d8d8d8" stroke-width="1" />
<text x="170.8" y="672.0" font-size="7.6" fill="#505050" font-weight="400" textLength="48.0" lengthAdjust="spacingAndGlyphs">Слайд 8 из 10</text>
<path d="M232 666 Q234.4 665 236.6 666.4 Q238.8 665 241 666 V672.4 Q238.8 671.6 236.6 672.8 Q234.4 671.6 232 672.4 Z M236.6 666.4 V672.8" stroke="#777" fill="none" stroke-width="0.7" />
<text x="251.8" y="672.0" font-size="7.6" fill="#333" font-weight="400" textLength="43.1" lengthAdjust="spacingAndGlyphs">украинский</text>
<circle cx="310" cy="668.6" r="3.4" fill="none" stroke="#666" stroke-width="0.8" />
<path d="M311 669.6 L316 674.6 M314 670.6 L316.2 672" stroke="#444" fill="none" stroke-width="1" />
<text x="318.8" y="672.0" font-size="7.6" fill="#505050" font-weight="400" textLength="198.4" lengthAdjust="spacingAndGlyphs">Специальные возможности: проверьте рекомендации</text>
<path d="M542 673.6 H548.6 M543.6 671.6 H547 M545.3 670.6 V665.6 M543.2 667.6 L545.3 665.6 L547.4 667.6" stroke="#777" fill="none" stroke-width="0.9" />
<text x="552.5" y="672.0" font-size="7.6" fill="#505050" font-weight="400" textLength="29.7" lengthAdjust="spacingAndGlyphs">Заметки</text>
<path d="M596 665.6 H605 V671 H599.6 L597.4 673.6 V671 H596 Z" stroke="none" fill="#777" stroke-width="1" />
<text x="607.2" y="672.0" font-size="7.6" fill="#505050" font-weight="400" textLength="45.9" lengthAdjust="spacingAndGlyphs">Примечания</text>
<rect x="666.6" y="663" width="26.50" height="13.00" fill="#d6d6d6" rx="0" />
<path d="M675.4 665.2 H684.8 V674 H675.4 Z M677 666.8 H683.2 V671 H677 Z" stroke="#666" fill="none" stroke-width="0.7" />
<rect x="702" y="665.4" width="4.00" height="3.40" fill="none" rx="0" stroke="#777" stroke-width="0.7"/>
<rect x="707.6" y="665.4" width="4.00" height="3.40" fill="none" rx="0" stroke="#777" stroke-width="0.7"/>
<rect x="702" y="670.4" width="4.00" height="3.40" fill="none" rx="0" stroke="#777" stroke-width="0.7"/>
<rect x="707.6" y="670.4" width="4.00" height="3.40" fill="none" rx="0" stroke="#777" stroke-width="0.7"/>
<path d="M729.4 665.6 Q731.6 665 733.4 666.4 Q735.2 665 737.4 665.6 V673.8 Q735.2 673.2 733.4 674.4 Q731.6 673.2 729.4 673.8 Z M733.4 666.4 V674.4" stroke="#777" fill="none" stroke-width="0.7" />
<path d="M756.4 665.8 H765 M757.2 665.8 V670.6 H764.2 V665.8 M760.7 670.6 V673.8 M758.6 674.2 H762.8" stroke="#777" fill="none" stroke-width="0.8" />
<line x1="778" y1="669.8" x2="783" y2="669.8" stroke="#777" stroke-width="0.9" />
<line x1="787" y1="669.8" x2="854" y2="669.8" stroke="#aaa" stroke-width="0.8" />
<rect x="808" y="666.2" width="3.80" height="7.80" fill="#666" rx="0" />
<line x1="832" y1="668.4" x2="832" y2="671.2" stroke="#999" stroke-width="0.7" />
<path d="M858.8 669.8 H863.2 M861 667.6 V672" stroke="#777" fill="none" stroke-width="0.9" />
<text x="871.3" y="672.9" font-size="7.8" fill="#505050" font-weight="400" textLength="14.6" lengthAdjust="spacingAndGlyphs">70%</text>
<path d="M895.2 666 H903.2 V674 H895.2 Z" stroke="#999" fill="none" stroke-width="0.7" />
<path d="M896.8 667.6 L898.8 669.6 M901.6 667.6 L899.6 669.6 M896.8 672.4 L898.8 670.4 M901.6 672.4 L899.6 670.4" stroke="#777" fill="none" stroke-width="0.8" />
<rect x="904.3" y="209.2" width="9.40" height="404.80" fill="#dedede" rx="0" />
<rect x="904.6" y="209.4" width="8.80" height="9.80" fill="#ffffff" rx="0" stroke="#cfcfcf" stroke-width="0.7"/>
<path d="M907 215.6 L909 213.4 L911 215.6 Z" stroke="none" fill="#555" stroke-width="1" />
<rect x="905" y="494.5" width="8.60" height="39.50" fill="#ffffff" rx="0" stroke="#cfcfcf" stroke-width="0.7"/>
<rect x="904.6" y="614" width="8.80" height="7.70" fill="#ffffff" rx="0" stroke="#cfcfcf" stroke-width="0.7"/>
<path d="M907 616.6 L909 618.8 L911 616.6 Z" stroke="none" fill="#555" stroke-width="1" />
<path d="M906.8 628.6 L909 626.4 L911.2 628.6 M906.8 631 L909 628.8 L911.2 631 M906.8 639.4 L909 641.6 L911.2 639.4 M906.8 641.8 L909 644 L911.2 641.8" stroke="#666" fill="none" stroke-width="0.8" />
<rect x="289.8" y="262.9" width="605.70" height="341.60" fill="#d8d8d8" rx="0" opacity="0.7"/>
<rect x="291.3" y="264.4" width="602.70" height="338.60" fill="url(#slbg3)" rx="0" />
<g clip-path="url(#slclip)">
<g transform="rotate(-35 328 283)">
<ellipse cx="328.96" cy="284.60" rx="36.3" ry="26.3" fill="#6e6e6e" opacity="0.75" filter="url(#dsh)"/>
<ellipse cx="328.48" cy="283.80" rx="36" ry="26" fill="#ffffff"/>
<ellipse cx="327.76" cy="282.52" rx="35.4" ry="25.3" fill="#f8f8f8" stroke="#c4c4c4" stroke-width="0.6"/>
<ellipse cx="328" cy="283" rx="36" ry="26" fill="url(#hl)"/>
</g>
<g transform="rotate(-18 391 266.5)">
<ellipse cx="391.86" cy="267.94" rx="21.3" ry="13.9" fill="#6e6e6e" opacity="0.75" filter="url(#dsh)"/>
<ellipse cx="391.43" cy="267.22" rx="21" ry="13.6" fill="#ffffff"/>
<ellipse cx="390.78" cy="266.07" rx="20.4" ry="12.9" fill="#f8f8f8" stroke="#c4c4c4" stroke-width="0.6"/>
<ellipse cx="391" cy="266.5" rx="21" ry="13.6" fill="url(#hl)"/>
</g>
<g>
<ellipse cx="411.83" cy="287.88" rx="7.2" ry="7.2" fill="#6e6e6e" opacity="0.75" filter="url(#dsh)"/>
<ellipse cx="411.56" cy="287.44" rx="6.9" ry="6.9" fill="#ffffff"/>
<ellipse cx="411.17" cy="286.74" rx="6.300000000000001" ry="6.2" fill="#f2f2f2" stroke="#c4c4c4" stroke-width="0.6"/>
<ellipse cx="411.3" cy="287" rx="6.9" ry="6.9" fill="url(#hl)"/>
</g>
<g>
<ellipse cx="332.95" cy="320.15" rx="4.1" ry="4.1" fill="#8a8a8a" opacity="0.75" filter="url(#dsh)"/>
<ellipse cx="332.73" cy="319.78" rx="3.8" ry="3.8" fill="#ffffff"/>
<ellipse cx="332.39" cy="319.17" rx="3.1999999999999997" ry="3.0999999999999996" fill="#f2f2f2" stroke="#c4c4c4" stroke-width="0.6"/>
<ellipse cx="332.5" cy="319.4" rx="3.8" ry="3.8" fill="url(#hl)"/>
</g>
<g>
<ellipse cx="321.01" cy="336.25" rx="6.5" ry="6.5" fill="#6e6e6e" opacity="0.75" filter="url(#dsh)"/>
<ellipse cx="320.75" cy="335.82" rx="6.2" ry="6.2" fill="#ffffff"/>
<ellipse cx="320.37" cy="335.15" rx="5.6000000000000005" ry="5.5" fill="#f2f2f2" stroke="#c4c4c4" stroke-width="0.6"/>
<ellipse cx="320.5" cy="335.4" rx="6.2" ry="6.2" fill="url(#hl)"/>
</g>
<g>
<ellipse cx="828.53" cy="257.79" rx="20.0" ry="20.0" fill="#6e6e6e" opacity="0.75" filter="url(#dsh)"/>
<ellipse cx="828.12" cy="257.09" rx="19.7" ry="19.7" fill="#ffffff"/>
<ellipse cx="827.49" cy="255.98" rx="19.099999999999998" ry="19.0" fill="#f7f7f7" stroke="#c4c4c4" stroke-width="0.6"/>
<ellipse cx="827.7" cy="256.4" rx="19.7" ry="19.7" fill="url(#hl)"/>
</g>
<g>
<ellipse cx="855.60" cy="309.20" rx="10.3" ry="10.3" fill="#6e6e6e" opacity="0.75" filter="url(#dsh)"/>
<ellipse cx="855.30" cy="308.70" rx="10" ry="10" fill="#ffffff"/>
<ellipse cx="854.85" cy="307.90" rx="9.4" ry="9.3" fill="#f3f3f3" stroke="#c4c4c4" stroke-width="0.6"/>
<ellipse cx="855" cy="308.2" rx="10" ry="10" fill="url(#hl)"/>
</g>
<g>
<ellipse cx="856.18" cy="525.24" rx="6.3" ry="6.3" fill="#6c6c6c" opacity="0.55" filter="url(#dsh)"/>
<ellipse cx="855.92" cy="524.85" rx="6" ry="6" fill="#ffffff"/>
<ellipse cx="855.14" cy="523.88" rx="5.80" ry="5.80" fill="#d8d8d8" stroke="#a0a0a0" stroke-width="0.5"/>
<ellipse cx="853.30" cy="523.00" rx="2.10" ry="1.80" fill="#f2f2f2" opacity="0.7" filter="url(#dsh)"/>
</g>
<g transform="rotate(-32 876.2 550.2)">
<ellipse cx="877.47" cy="551.90" rx="14.5" ry="12.100000000000001" fill="#6c6c6c" opacity="0.55" filter="url(#dsh)"/>
<ellipse cx="877.05" cy="551.26" rx="14.2" ry="11.8" fill="#ffffff"/>
<ellipse cx="875.78" cy="549.67" rx="13.88" ry="11.48" fill="#d2d2d2" stroke="#a0a0a0" stroke-width="0.5"/>
<ellipse cx="871.23" cy="547.84" rx="4.97" ry="3.54" fill="#f2f2f2" opacity="0.7" filter="url(#dsh)"/>
</g>
<g>
<ellipse cx="641.54" cy="580.38" rx="5.6" ry="5.6" fill="#6c6c6c" opacity="0.55" filter="url(#dsh)"/>
<ellipse cx="641.29" cy="580.01" rx="5.3" ry="5.3" fill="#ffffff"/>
<ellipse cx="640.55" cy="579.09" rx="5.12" ry="5.12" fill="#d2d2d2" stroke="#a0a0a0" stroke-width="0.5"/>
<ellipse cx="638.94" cy="578.34" rx="1.85" ry="1.59" fill="#f2f2f2" opacity="0.7" filter="url(#dsh)"/>
</g>
<g>
<ellipse cx="673.28" cy="578.48" rx="13.0" ry="12.8" fill="#6c6c6c" opacity="0.55" filter="url(#dsh)"/>
<ellipse cx="672.89" cy="577.88" rx="12.7" ry="12.5" fill="#ffffff"/>
<ellipse cx="671.71" cy="576.41" rx="12.40" ry="12.20" fill="#d0d0d0" stroke="#a0a0a0" stroke-width="0.5"/>
<ellipse cx="667.65" cy="574.40" rx="4.44" ry="3.75" fill="#f2f2f2" opacity="0.7" filter="url(#dsh)"/>
</g>
<g>
<ellipse cx="727.02" cy="588.32" rx="13.600000000000001" ry="12.0" fill="#6c6c6c" opacity="0.55" filter="url(#dsh)"/>
<ellipse cx="726.61" cy="587.72" rx="13.3" ry="11.7" fill="#ffffff"/>
<ellipse cx="725.39" cy="586.19" rx="13.00" ry="11.40" fill="#cacaca" stroke="#a0a0a0" stroke-width="0.5"/>
<ellipse cx="721.14" cy="584.36" rx="4.66" ry="3.51" fill="#f2f2f2" opacity="0.7" filter="url(#dsh)"/>
</g>
<g>
<ellipse cx="800.92" cy="585.26" rx="5.3" ry="5.3" fill="#6c6c6c" opacity="0.55" filter="url(#dsh)"/>
<ellipse cx="800.68" cy="584.90" rx="5.0" ry="5.0" fill="#ffffff"/>
<ellipse cx="799.96" cy="584.00" rx="4.82" ry="4.82" fill="#cccccc" stroke="#a0a0a0" stroke-width="0.5"/>
<ellipse cx="798.45" cy="583.30" rx="1.75" ry="1.50" fill="#f2f2f2" opacity="0.7" filter="url(#dsh)"/>
</g>
<g>
<ellipse cx="799.18" cy="602.27" rx="2.9" ry="2.9" fill="#6c6c6c" opacity="0.55" filter="url(#dsh)"/>
<ellipse cx="798.98" cy="601.98" rx="2.6" ry="2.6" fill="#ffffff"/>
<ellipse cx="798.41" cy="601.26" rx="2.46" ry="2.46" fill="#c8c8c8" stroke="#a0a0a0" stroke-width="0.5"/>
<ellipse cx="797.69" cy="600.98" rx="0.91" ry="0.78" fill="#f2f2f2" opacity="0.7" filter="url(#dsh)"/>
</g>
<path d="M810.5 606 C808.5 586 821 575 840 571.5 C851 569.5 857 566.8 863.5 567.6 C873.5 569.5 876 588 872.6 606 Z" fill="#6c6c6c" opacity="0.55" filter="url(#dsh)" transform="translate(2.2 2.2)"/>
<path d="M810.5 606 C808.5 586 821 575 840 571.5 C851 569.5 857 566.8 863.5 567.6 C873.5 569.5 876 588 872.6 606 Z" fill="#ffffff" transform="translate(1.6 1.2)"/>
<path d="M810.5 606 C808.5 586 821 575 840 571.5 C851 569.5 857 566.8 863.5 567.6 C873.5 569.5 876 588 872.6 606 Z" fill="#cbcbcb" stroke="#a0a0a0" stroke-width="0.5" transform="translate(-0.6 -0.6)"/>
<ellipse cx="826" cy="588" rx="11" ry="8" fill="#e8e8e8" opacity="0.5" filter="url(#dsh)"/>
</g>
<text x="469.4" y="317.3" font-size="20.4" fill="#0d0d0d" font-weight="700" textLength="248.0" lengthAdjust="spacingAndGlyphs" stroke="#0d0d0d" stroke-width="0.35">КЛАСИЧНІ ВИДИ БУЛІНГУ</text>
<path d="M637 319.6 L639 320.20000000000005 L641 319.20000000000005 L643 320.20000000000005 L645 319.20000000000005 L647 320.20000000000005 L649 319.20000000000005 L651 320.20000000000005 L653 319.20000000000005 L655 320.20000000000005 L657 319.20000000000005 L659 320.20000000000005 L661 319.20000000000005 L663 320.20000000000005 L665 319.20000000000005 L667 320.20000000000005 L669 319.20000000000005 L671 320.20000000000005 L673 319.20000000000005 L675 320.20000000000005 L677 319.20000000000005 L679 320.20000000000005 L681 319.20000000000005 L683 320.20000000000005 L685 319.20000000000005 L687 320.20000000000005 L689 319.20000000000005 L691 320.20000000000005 L693 319.20000000000005 L695 320.20000000000005 L697 319.20000000000005 L699 320.20000000000005 L701 319.20000000000005 L703 320.20000000000005 L705 319.20000000000005 L707 320.20000000000005 L709 319.20000000000005 L711 320.20000000000005 L713 319.20000000000005 L715 320.20000000000005 L717 319.20000000000005" stroke="#d84848" fill="none" stroke-width="0.8" />
<rect x="337" y="334.7" width="511.20" height="13.20" fill="#1f93ed" rx="0" />
<rect x="337" y="349.4" width="75.80" height="40.50" fill="#1f93ed" rx="0" />
<rect x="413.9" y="349.4" width="434.30" height="40.50" fill="#c8dcf4" rx="0" />
<rect x="337" y="391.1" width="75.80" height="27.10" fill="#1f93ed" rx="0" />
<rect x="413.9" y="391.1" width="434.30" height="27.10" fill="#e3ecf8" rx="0" />
<rect x="337" y="419.3" width="75.80" height="40.00" fill="#1f93ed" rx="0" />
<rect x="413.9" y="419.3" width="434.30" height="40.00" fill="#c8dcf4" rx="0" />
<rect x="337" y="460.7" width="75.80" height="26.50" fill="#1f93ed" rx="0" />
<rect x="413.9" y="460.7" width="434.30" height="26.50" fill="#e3ecf8" rx="0" />
<rect x="337" y="488.4" width="75.80" height="54.30" fill="#1f93ed" rx="0" />
<rect x="413.9" y="488.4" width="434.30" height="54.30" fill="#c8dcf4" rx="0" />
<rect x="412.8" y="334.7" width="1.10" height="13.20" fill="#ffffff" rx="0" opacity="0.8"/>
<rect x="627.8" y="334.7" width="0.70" height="13.20" fill="#ffffff" rx="0" opacity="0.8"/>
<rect x="627.8" y="349.4" width="0.60" height="40.50" fill="#ffffff" rx="0" opacity="0.35"/>
<rect x="627.8" y="391.1" width="0.60" height="27.10" fill="#ffffff" rx="0" opacity="0.35"/>
<rect x="627.8" y="419.3" width="0.60" height="40.00" fill="#ffffff" rx="0" opacity="0.35"/>
<rect x="627.8" y="460.7" width="0.60" height="26.50" fill="#ffffff" rx="0" opacity="0.35"/>
<rect x="627.8" y="488.4" width="0.60" height="54.30" fill="#ffffff" rx="0" opacity="0.35"/>
<text x="337.7" y="346.3" font-size="11.2" fill="#ffffff" font-weight="700" textLength="18.3" lengthAdjust="spacingAndGlyphs">Вид</text>
<text x="413.7" y="346.3" font-size="11.2" fill="#ffffff" font-weight="700" textLength="24.9" lengthAdjust="spacingAndGlyphs">Опис</text>
<text x="629.5" y="346.3" font-size="11.2" fill="#ffffff" font-weight="700" textLength="48.7" lengthAdjust="spacingAndGlyphs">Приклади</text>
<text x="337.7" y="373.4" font-size="11.2" fill="#ffffff" font-weight="700" textLength="45.1" lengthAdjust="spacingAndGlyphs">Фізичний</text>
<text x="337.7" y="408.2" font-size="11.2" fill="#ffffff" font-weight="700" textLength="59.1" lengthAdjust="spacingAndGlyphs">Вербальний</text>
<text x="337.7" y="436.4" font-size="11.2" fill="#ffffff" font-weight="700" textLength="55.6" lengthAdjust="spacingAndGlyphs">Соціальний</text>
<text x="337.7" y="450.3" font-size="11.2" fill="#ffffff" font-weight="700" textLength="63.3" lengthAdjust="spacingAndGlyphs">(Реляційний)</text>
<text x="337.7" y="478.0" font-size="11.2" fill="#ffffff" font-weight="700" textLength="63.3" lengthAdjust="spacingAndGlyphs">Економічний</text>
<text x="337.7" y="519.7" font-size="11.2" fill="#ffffff" font-weight="700" textLength="55.6" lengthAdjust="spacingAndGlyphs">Кібербулінг</text>
<text x="414.4" y="359.7" font-size="11.0" fill="#1c1c1c" font-weight="400" textLength="201.3" lengthAdjust="spacingAndGlyphs" stroke="#1c1c1c" stroke-width="0.2">Прямий вплив на тіло або майно жертви.</text>
<text x="414.4" y="401.8" font-size="11.0" fill="#1c1c1c" font-weight="400" textLength="192.2" lengthAdjust="spacingAndGlyphs" stroke="#1c1c1c" stroke-width="0.2">Використання слів, інтонації, жестів для</text>
<text x="414.4" y="414.8" font-size="11.0" fill="#1c1c1c" font-weight="400" textLength="146.1" lengthAdjust="spacingAndGlyphs" stroke="#1c1c1c" stroke-width="0.2">образи, погрози, приниження.</text>
<text x="414.4" y="429.5" font-size="11.0" fill="#1c1c1c" font-weight="400" textLength="191.6" lengthAdjust="spacingAndGlyphs" stroke="#1c1c1c" stroke-width="0.2">Пошкодження репутації або соціальних</text>
<text x="414.4" y="442.5" font-size="11.0" fill="#1c1c1c" font-weight="400" textLength="194.9" lengthAdjust="spacingAndGlyphs" stroke="#1c1c1c" stroke-width="0.2">зв'язків жертви. Націлений на соціальну</text>
<text x="414.4" y="455.9" font-size="11.0" fill="#1c1c1c" font-weight="400" textLength="43.0" lengthAdjust="spacingAndGlyphs" stroke="#1c1c1c" stroke-width="0.2">ізоляцію.</text>
<text x="414.4" y="470.7" font-size="11.0" fill="#1c1c1c" font-weight="400" textLength="166.1" lengthAdjust="spacingAndGlyphs" stroke="#1c1c1c" stroke-width="0.2">Вимагання або відбирання майна.</text>
<text x="414.4" y="499.2" font-size="11.0" fill="#1c1c1c" font-weight="400" textLength="183.8" lengthAdjust="spacingAndGlyphs" stroke="#1c1c1c" stroke-width="0.2">Агресія із застосуванням електронних</text>
<text x="414.4" y="512.4" font-size="11.0" fill="#1c1c1c" font-weight="400" textLength="174.6" lengthAdjust="spacingAndGlyphs" stroke="#1c1c1c" stroke-width="0.2">засобів зв'язку (телефони, Інтернет).</text>
<text x="629.4" y="359.7" font-size="11.0" fill="#1c1c1c" font-weight="400" textLength="182.9" lengthAdjust="spacingAndGlyphs" stroke="#1c1c1c" stroke-width="0.2">Удари, штовхання, підніжки, псування</text>
<text x="629.4" y="373.7" font-size="11.0" fill="#1c1c1c" font-weight="400" textLength="190.0" lengthAdjust="spacingAndGlyphs" stroke="#1c1c1c" stroke-width="0.2">шкільного приладдя (розмальовування</text>
<text x="629.4" y="386.9" font-size="11.0" fill="#1c1c1c" font-weight="400" textLength="127.0" lengthAdjust="spacingAndGlyphs" stroke="#1c1c1c" stroke-width="0.2">зошитів, ламання олівців).</text>
<text x="629.4" y="402.2" font-size="11.0" fill="#1c1c1c" font-weight="400" textLength="214.4" lengthAdjust="spacingAndGlyphs" stroke="#1c1c1c" stroke-width="0.2">Давання образливих прізвиськ, глузування з</text>
<text x="629.4" y="415.0" font-size="11.0" fill="#1c1c1c" font-weight="400" textLength="135.4" lengthAdjust="spacingAndGlyphs" stroke="#1c1c1c" stroke-width="0.2">помилок у читанні, погрози.</text>
<text x="629.4" y="429.5" font-size="11.0" fill="#1c1c1c" font-weight="400" textLength="192.2" lengthAdjust="spacingAndGlyphs" stroke="#1c1c1c" stroke-width="0.2">Бойкот, ігнорування, поширення пліток,</text>
<text x="629.4" y="442.9" font-size="11.0" fill="#1c1c1c" font-weight="400" textLength="207.6" lengthAdjust="spacingAndGlyphs" stroke="#1c1c1c" stroke-width="0.2">навмисне виключення з гри ("Ти з нами не</text>
<text x="629.4" y="456.3" font-size="11.0" fill="#1c1c1c" font-weight="400" textLength="90.8" lengthAdjust="spacingAndGlyphs" stroke="#1c1c1c" stroke-width="0.2">граєш, тому що…").</text>
<text x="629.4" y="470.7" font-size="11.0" fill="#1c1c1c" font-weight="400" textLength="207.7" lengthAdjust="spacingAndGlyphs" stroke="#1c1c1c" stroke-width="0.2">Вимагання грошей, солодощів, відбирання</text>
<text x="629.4" y="484.1" font-size="11.0" fill="#1c1c1c" font-weight="400" textLength="137.6" lengthAdjust="spacingAndGlyphs" stroke="#1c1c1c" stroke-width="0.2">іграшок чи обмінних карток.</text>
<text x="629.4" y="498.6" font-size="11.0" fill="#1c1c1c" font-weight="400" textLength="206.6" lengthAdjust="spacingAndGlyphs" stroke="#1c1c1c" stroke-width="0.2">Образи у шкільних або батьківських чатах,</text>
<text x="629.4" y="512.0" font-size="11.0" fill="#1c1c1c" font-weight="400" textLength="182.1" lengthAdjust="spacingAndGlyphs" stroke="#1c1c1c" stroke-width="0.2">поширення скріншотів, виключення з</text>
<text x="629.4" y="526.4" font-size="11.0" fill="#1c1c1c" font-weight="400" textLength="200.0" lengthAdjust="spacingAndGlyphs" stroke="#1c1c1c" stroke-width="0.2">групового чату. (Цей вид зростає навіть у</text>
<text x="629.4" y="538.9" font-size="11.0" fill="#1c1c1c" font-weight="400" textLength="88.6" lengthAdjust="spacingAndGlyphs" stroke="#1c1c1c" stroke-width="0.2">початковій школі).</text>
<path d="M414.6 444.2 L416.2 444.7 L417.8 443.9 L419.4 444.7 L421.0 443.9 L422.6 444.7 L424.2 443.9 L425.8 444.7 L427.4 443.9 L429.0 444.7 L430.6 443.9 L432.2 444.7 L433.8 443.9 L435.4 444.7 L437.0 443.9 L438.6 444.7 L440.2 443.9 L441.8 444.7 L443.4 443.9 L445.0 444.7" stroke="#d84848" fill="none" stroke-width="0.8" />
<text x="174.4" y="227.6" font-size="9.6" fill="#444444" font-weight="400" textLength="4.0" lengthAdjust="spacingAndGlyphs">1</text>
<rect x="187.9" y="220.3" width="65.50" height="37.20" fill="#d0d0d0" rx="0" />
<rect x="188.4" y="220.8" width="64.50" height="36.20" fill="url(#thbg)" rx="0" />
<rect x="207" y="231.4" width="6.27" height="1.00" fill="#333" rx="0" opacity="0.75"/>
<rect x="213.93" y="231.4" width="8.55" height="1.00" fill="#333" rx="0" opacity="0.75"/>
<rect x="223.11" y="231.4" width="7.75" height="1.00" fill="#333" rx="0" opacity="0.75"/>
<rect x="231.61" y="231.4" width="1.39" height="1.00" fill="#333" rx="0" opacity="0.75"/>
<rect x="200" y="235.0" width="4.26" height="1.00" fill="#333" rx="0" opacity="0.75"/>
<rect x="205.04" y="235.0" width="4.48" height="1.00" fill="#333" rx="0" opacity="0.75"/>
<rect x="210.16" y="235.0" width="6.97" height="1.00" fill="#333" rx="0" opacity="0.75"/>
<rect x="218.06" y="235.0" width="4.87" height="1.00" fill="#333" rx="0" opacity="0.75"/>
<rect x="223.62" y="235.0" width="8.39" height="1.00" fill="#333" rx="0" opacity="0.75"/>
<rect x="232.99" y="235.0" width="7.01" height="1.00" fill="#333" rx="0" opacity="0.75"/>
<rect x="203" y="238.6" width="10.83" height="1.00" fill="#333" rx="0" opacity="0.75"/>
<rect x="214.45" y="238.6" width="10.01" height="1.00" fill="#333" rx="0" opacity="0.75"/>
<rect x="225.18" y="238.6" width="5.01" height="1.00" fill="#333" rx="0" opacity="0.75"/>
<rect x="230.83" y="238.6" width="6.16" height="1.00" fill="#333" rx="0" opacity="0.75"/>
<rect x="229" y="241.60000000000002" width="16.00" height="0.60" fill="#777" rx="0" opacity="0.6"/>
<text x="173.8" y="277.3" font-size="9.6" fill="#444444" font-weight="400" textLength="5.4" lengthAdjust="spacingAndGlyphs">2</text>
<rect x="187.9" y="270.0" width="65.50" height="37.20" fill="#d0d0d0" rx="0" />
<rect x="188.4" y="270.5" width="64.50" height="36.20" fill="url(#thbg)" rx="0" />
<rect x="217" y="275.9" width="5.27" height="0.80" fill="#333" rx="0" opacity="0.6"/>
<rect x="223.1" y="275.9" width="0.90" height="0.80" fill="#333" rx="0" opacity="0.6"/>
<rect x="196" y="279.1" width="7.83" height="0.70" fill="#333" rx="0" opacity="0.45"/>
<rect x="204.46" y="279.1" width="4.42" height="0.70" fill="#333" rx="0" opacity="0.45"/>
<rect x="209.56" y="279.1" width="8.76" height="0.70" fill="#333" rx="0" opacity="0.45"/>
<rect x="219.09" y="279.1" width="6.20" height="0.70" fill="#333" rx="0" opacity="0.45"/>
<rect x="226.13" y="279.1" width="7.17" height="0.70" fill="#333" rx="0" opacity="0.45"/>
<rect x="234.02" y="279.1" width="9.56" height="0.70" fill="#333" rx="0" opacity="0.45"/>
<rect x="244.46" y="279.1" width="2.54" height="0.70" fill="#333" rx="0" opacity="0.45"/>
<rect x="196" y="280.7" width="7.68" height="0.70" fill="#333" rx="0" opacity="0.45"/>
<rect x="204.63" y="280.7" width="9.10" height="0.70" fill="#333" rx="0" opacity="0.45"/>
<rect x="214.45" y="280.7" width="5.55" height="0.70" fill="#333" rx="0" opacity="0.45"/>
<rect x="196" y="284.1" width="6.93" height="0.70" fill="#333" rx="0" opacity="0.45"/>
<rect x="203.83" y="284.1" width="5.06" height="0.70" fill="#333" rx="0" opacity="0.45"/>
<rect x="209.69" y="284.1" width="4.27" height="0.70" fill="#333" rx="0" opacity="0.45"/>
<rect x="214.83" y="284.1" width="9.35" height="0.70" fill="#333" rx="0" opacity="0.45"/>
<rect x="225.01" y="284.1" width="10.13" height="0.70" fill="#333" rx="0" opacity="0.45"/>
<rect x="235.87" y="284.1" width="8.86" height="0.70" fill="#333" rx="0" opacity="0.45"/>
<rect x="245.57" y="284.1" width="1.43" height="0.70" fill="#333" rx="0" opacity="0.45"/>
<rect x="196" y="285.7" width="9.88" height="0.70" fill="#333" rx="0" opacity="0.45"/>
<rect x="206.86" y="285.7" width="7.14" height="0.70" fill="#333" rx="0" opacity="0.45"/>
<rect x="196" y="289.1" width="4.42" height="0.70" fill="#333" rx="0" opacity="0.45"/>
<rect x="201.31" y="289.1" width="8.53" height="0.70" fill="#333" rx="0" opacity="0.45"/>
<rect x="210.83" y="289.1" width="9.76" height="0.70" fill="#333" rx="0" opacity="0.45"/>
<rect x="221.3" y="289.1" width="6.70" height="0.70" fill="#333" rx="0" opacity="0.45"/>
<rect x="228.87" y="289.1" width="4.16" height="0.70" fill="#333" rx="0" opacity="0.45"/>
<rect x="233.81" y="289.1" width="5.18" height="0.70" fill="#333" rx="0" opacity="0.45"/>
<rect x="239.63" y="289.1" width="4.42" height="0.70" fill="#333" rx="0" opacity="0.45"/>
<rect x="244.95" y="289.1" width="2.05" height="0.70" fill="#333" rx="0" opacity="0.45"/>
<rect x="196" y="290.7" width="6.74" height="0.70" fill="#333" rx="0" opacity="0.45"/>
<rect x="203.69" y="290.7" width="4.56" height="0.70" fill="#333" rx="0" opacity="0.45"/>
<rect x="209.03" y="290.7" width="7.85" height="0.70" fill="#333" rx="0" opacity="0.45"/>
<rect x="217.83" y="290.7" width="9.73" height="0.70" fill="#333" rx="0" opacity="0.45"/>
<rect x="196" y="293.9" width="5.95" height="0.70" fill="#333" rx="0" opacity="0.45"/>
<rect x="202.72" y="293.9" width="6.51" height="0.70" fill="#333" rx="0" opacity="0.45"/>
<rect x="210.18" y="293.9" width="10.70" height="0.70" fill="#333" rx="0" opacity="0.45"/>
<rect x="221.54" y="293.9" width="5.24" height="0.70" fill="#333" rx="0" opacity="0.45"/>
<rect x="227.47" y="293.9" width="5.63" height="0.70" fill="#333" rx="0" opacity="0.45"/>
<rect x="233.9" y="293.9" width="8.12" height="0.70" fill="#333" rx="0" opacity="0.45"/>
<rect x="242.73" y="293.9" width="4.03" height="0.70" fill="#333" rx="0" opacity="0.45"/>
<rect x="196" y="295.5" width="6.58" height="0.70" fill="#333" rx="0" opacity="0.45"/>
<rect x="203.41" y="295.5" width="10.67" height="0.70" fill="#333" rx="0" opacity="0.45"/>
<rect x="214.96" y="295.5" width="7.04" height="0.70" fill="#333" rx="0" opacity="0.45"/>
<circle cx="193.4" cy="279.6" r="0.6" fill="#555" stroke="none" stroke-width="1" />
<circle cx="193.4" cy="284.6" r="0.6" fill="#555" stroke="none" stroke-width="1" />
<circle cx="193.4" cy="289.6" r="0.6" fill="#555" stroke="none" stroke-width="1" />
<circle cx="193.4" cy="294.40000000000003" r="0.6" fill="#555" stroke="none" stroke-width="1" />
<text x="173.8" y="327.0" font-size="9.6" fill="#444444" font-weight="400" textLength="5.4" lengthAdjust="spacingAndGlyphs">3</text>
<rect x="187.9" y="319.70000000000005" width="65.50" height="37.20" fill="#d0d0d0" rx="0" />
<rect x="188.4" y="320.20000000000005" width="64.50" height="36.20" fill="url(#thbg)" rx="0" />
<rect x="193" y="323.8" width="8.73" height="0.90" fill="#8a6a30" rx="0" opacity="0.5"/>
<rect x="202.35" y="323.8" width="10.30" height="0.90" fill="#8a6a30" rx="0" opacity="0.5"/>
<rect x="213.56" y="323.8" width="10.13" height="0.90" fill="#8a6a30" rx="0" opacity="0.5"/>
<rect x="224.6" y="323.8" width="6.75" height="0.90" fill="#8a6a30" rx="0" opacity="0.5"/>
<rect x="232.11" y="323.8" width="4.73" height="0.90" fill="#8a6a30" rx="0" opacity="0.5"/>
<rect x="237.69" y="323.8" width="4.43" height="0.90" fill="#8a6a30" rx="0" opacity="0.5"/>
<rect x="242.75" y="323.8" width="2.25" height="0.90" fill="#8a6a30" rx="0" opacity="0.5"/>
<rect x="195" y="326.8" width="6.38" height="0.80" fill="#333" rx="0" opacity="0.45"/>
<rect x="202.0" y="326.8" width="4.00" height="0.80" fill="#333" rx="0" opacity="0.45"/>
<rect x="206.66" y="326.8" width="4.71" height="0.80" fill="#333" rx="0" opacity="0.45"/>
<rect x="212.12" y="326.8" width="4.18" height="0.80" fill="#333" rx="0" opacity="0.45"/>
<rect x="217.25" y="326.8" width="8.30" height="0.80" fill="#333" rx="0" opacity="0.45"/>
<rect x="226.21" y="326.8" width="5.76" height="0.80" fill="#333" rx="0" opacity="0.45"/>
<rect x="232.71" y="326.8" width="6.55" height="0.80" fill="#333" rx="0" opacity="0.45"/>
<rect x="239.91" y="326.8" width="3.09" height="0.80" fill="#333" rx="0" opacity="0.45"/>
<rect x="205" y="329.0" width="7.26" height="0.80" fill="#333" rx="0" opacity="0.45"/>
<rect x="213.06" y="329.0" width="4.60" height="0.80" fill="#333" rx="0" opacity="0.45"/>
<rect x="218.3" y="329.0" width="6.40" height="0.80" fill="#333" rx="0" opacity="0.45"/>
<rect x="225.4" y="329.0" width="6.60" height="0.80" fill="#333" rx="0" opacity="0.45"/>
<rect x="194.2" y="332.00000000000006" width="53.50" height="1.80" fill="#2196f3" rx="0" />
<rect x="194.2" y="333.80000000000007" width="11.90" height="18.00" fill="#2196f3" rx="0" />
<rect x="206.1" y="333.80000000000007" width="41.60" height="18.00" fill="#d2e3f6" rx="0" />
<rect x="207.1" y="335.2" width="4.16" height="0.60" fill="#333" rx="0" opacity="0.45"/>
<rect x="212.24" y="335.2" width="7.70" height="0.60" fill="#333" rx="0" opacity="0.45"/>
<rect x="220.6" y="335.2" width="5.30" height="0.60" fill="#333" rx="0" opacity="0.45"/>
<rect x="227.9" y="335.2" width="7.70" height="0.60" fill="#333" rx="0" opacity="0.45"/>
<rect x="236.59" y="335.2" width="10.04" height="0.60" fill="#333" rx="0" opacity="0.45"/>
<rect x="207.1" y="337.18" width="5.83" height="0.60" fill="#333" rx="0" opacity="0.45"/>
<rect x="213.67" y="337.18" width="5.17" height="0.60" fill="#333" rx="0" opacity="0.45"/>
<rect x="219.75" y="337.18" width="3.15" height="0.60" fill="#333" rx="0" opacity="0.45"/>
<rect x="227.9" y="337.18" width="6.31" height="0.60" fill="#333" rx="0" opacity="0.45"/>
<rect x="234.9" y="337.18" width="6.80" height="0.60" fill="#333" rx="0" opacity="0.45"/>
<rect x="207.1" y="339.15" width="9.97" height="0.60" fill="#333" rx="0" opacity="0.45"/>
<rect x="217.99" y="339.15" width="1.91" height="0.60" fill="#333" rx="0" opacity="0.45"/>
<rect x="227.9" y="339.15" width="5.59" height="0.60" fill="#333" rx="0" opacity="0.45"/>
<rect x="234.29" y="339.15" width="6.49" height="0.60" fill="#333" rx="0" opacity="0.45"/>
<rect x="241.39" y="339.15" width="4.20" height="0.60" fill="#333" rx="0" opacity="0.45"/>
<rect x="246.3" y="339.15" width="0.40" height="0.60" fill="#333" rx="0" opacity="0.45"/>
<rect x="207.1" y="341.13" width="10.70" height="0.60" fill="#333" rx="0" opacity="0.45"/>
<rect x="218.57" y="341.13" width="7.33" height="0.60" fill="#333" rx="0" opacity="0.45"/>
<rect x="227.9" y="341.13" width="10.69" height="0.60" fill="#333" rx="0" opacity="0.45"/>
<rect x="239.33" y="341.13" width="2.37" height="0.60" fill="#333" rx="0" opacity="0.45"/>
<rect x="207.1" y="343.1" width="5.38" height="0.60" fill="#333" rx="0" opacity="0.45"/>
<rect x="213.16" y="343.1" width="8.37" height="0.60" fill="#333" rx="0" opacity="0.45"/>
<rect x="222.49" y="343.1" width="0.41" height="0.60" fill="#333" rx="0" opacity="0.45"/>
<rect x="227.9" y="343.1" width="8.57" height="0.60" fill="#333" rx="0" opacity="0.45"/>
<rect x="237.39" y="343.1" width="4.59" height="0.60" fill="#333" rx="0" opacity="0.45"/>
<rect x="242.85" y="343.1" width="3.85" height="0.60" fill="#333" rx="0" opacity="0.45"/>
<rect x="207.1" y="345.08" width="9.25" height="0.60" fill="#333" rx="0" opacity="0.45"/>
<rect x="217.14" y="345.08" width="2.76" height="0.60" fill="#333" rx="0" opacity="0.45"/>
<rect x="227.9" y="345.08" width="6.33" height="0.60" fill="#333" rx="0" opacity="0.45"/>
<rect x="235.15" y="345.08" width="6.55" height="0.60" fill="#333" rx="0" opacity="0.45"/>
<rect x="207.1" y="347.05" width="6.81" height="0.60" fill="#333" rx="0" opacity="0.45"/>
<rect x="214.89" y="347.05" width="9.07" height="0.60" fill="#333" rx="0" opacity="0.45"/>
<rect x="224.63" y="347.05" width="1.27" height="0.60" fill="#333" rx="0" opacity="0.45"/>
<rect x="227.9" y="347.05" width="10.33" height="0.60" fill="#333" rx="0" opacity="0.45"/>
<rect x="239.16" y="347.05" width="5.02" height="0.60" fill="#333" rx="0" opacity="0.45"/>
<rect x="245.11" y="347.05" width="1.59" height="0.60" fill="#333" rx="0" opacity="0.45"/>
<rect x="207.1" y="349.03" width="6.45" height="0.60" fill="#333" rx="0" opacity="0.45"/>
<rect x="214.37" y="349.03" width="4.92" height="0.60" fill="#333" rx="0" opacity="0.45"/>
<rect x="219.89" y="349.03" width="3.01" height="0.60" fill="#333" rx="0" opacity="0.45"/>
<rect x="227.9" y="349.03" width="7.69" height="0.60" fill="#333" rx="0" opacity="0.45"/>
<rect x="236.56" y="349.03" width="5.14" height="0.60" fill="#333" rx="0" opacity="0.45"/>
<text x="173.8" y="376.7" font-size="9.6" fill="#444444" font-weight="400" textLength="5.4" lengthAdjust="spacingAndGlyphs">4</text>
<rect x="187.9" y="369.40000000000003" width="65.50" height="37.20" fill="#d0d0d0" rx="0" />
<rect x="188.4" y="369.90000000000003" width="64.50" height="36.20" fill="url(#thbg)" rx="0" />
<rect x="203" y="375.7" width="9.78" height="0.90" fill="#333" rx="0" opacity="0.75"/>
<rect x="213.47" y="375.7" width="5.76" height="0.90" fill="#333" rx="0" opacity="0.75"/>
<rect x="219.95" y="375.7" width="5.68" height="0.90" fill="#333" rx="0" opacity="0.75"/>
<rect x="226.47" y="375.7" width="5.81" height="0.90" fill="#333" rx="0" opacity="0.75"/>
<rect x="233.05" y="375.7" width="4.92" height="0.90" fill="#333" rx="0" opacity="0.75"/>
<rect x="238.93" y="375.7" width="2.07" height="0.90" fill="#333" rx="0" opacity="0.75"/>
<rect x="196" y="377.7" width="8.08" height="0.90" fill="#333" rx="0" opacity="0.75"/>
<rect x="205.05" y="377.7" width="6.94" height="0.90" fill="#333" rx="0" opacity="0.75"/>
<rect x="212.96" y="377.7" width="7.51" height="0.90" fill="#333" rx="0" opacity="0.75"/>
<rect x="221.28" y="377.7" width="7.67" height="0.90" fill="#333" rx="0" opacity="0.75"/>
<rect x="229.55" y="377.7" width="7.08" height="0.90" fill="#333" rx="0" opacity="0.75"/>
<rect x="237.31" y="377.7" width="4.02" height="0.90" fill="#333" rx="0" opacity="0.75"/>
<rect x="242.25" y="377.7" width="5.21" height="0.90" fill="#333" rx="0" opacity="0.75"/>
<rect x="196" y="380.5" width="9.08" height="0.90" fill="#6a4a20" rx="0" opacity="0.6"/>
<rect x="205.9" y="380.5" width="6.28" height="0.90" fill="#6a4a20" rx="0" opacity="0.6"/>
<rect x="212.99" y="380.5" width="7.89" height="0.90" fill="#6a4a20" rx="0" opacity="0.6"/>
<rect x="221.79" y="380.5" width="4.74" height="0.90" fill="#6a4a20" rx="0" opacity="0.6"/>
<rect x="227.36" y="380.5" width="5.74" height="0.90" fill="#6a4a20" rx="0" opacity="0.6"/>
<rect x="233.81" y="380.5" width="9.40" height="0.90" fill="#6a4a20" rx="0" opacity="0.6"/>
<rect x="244.02" y="380.5" width="3.98" height="0.90" fill="#6a4a20" rx="0" opacity="0.6"/>
<rect x="194" y="383.70000000000005" width="54.00" height="1.60" fill="#2196f3" rx="0" />
<rect x="194" y="385.30000000000007" width="14.80" height="13.60" fill="#2196f3" rx="0" />
<rect x="208.8" y="385.30000000000007" width="39.20" height="13.60" fill="#d2e3f6" rx="0" />
<rect x="209.8" y="386.7" width="10.39" height="0.60" fill="#333" rx="0" opacity="0.45"/>
<rect x="220.96" y="386.7" width="8.29" height="0.60" fill="#333" rx="0" opacity="0.45"/>
<rect x="230.05" y="386.7" width="7.59" height="0.60" fill="#333" rx="0" opacity="0.45"/>
<rect x="238.52" y="386.7" width="7.16" height="0.60" fill="#333" rx="0" opacity="0.45"/>
<rect x="246.5" y="386.7" width="0.50" height="0.60" fill="#333" rx="0" opacity="0.45"/>
<rect x="209.8" y="388.6" width="8.89" height="0.60" fill="#333" rx="0" opacity="0.45"/>
<rect x="219.65" y="388.6" width="10.59" height="0.60" fill="#333" rx="0" opacity="0.45"/>
<rect x="230.94" y="388.6" width="7.92" height="0.60" fill="#333" rx="0" opacity="0.45"/>
<rect x="239.84" y="388.6" width="1.16" height="0.60" fill="#333" rx="0" opacity="0.45"/>
<rect x="209.8" y="390.5" width="4.85" height="0.60" fill="#333" rx="0" opacity="0.45"/>
<rect x="215.43" y="390.5" width="4.51" height="0.60" fill="#333" rx="0" opacity="0.45"/>
<rect x="220.63" y="390.5" width="4.51" height="0.60" fill="#333" rx="0" opacity="0.45"/>
<rect x="226.01" y="390.5" width="8.99" height="0.60" fill="#333" rx="0" opacity="0.45"/>
<rect x="209.8" y="392.4" width="5.08" height="0.60" fill="#333" rx="0" opacity="0.45"/>
<rect x="215.77" y="392.4" width="8.62" height="0.60" fill="#333" rx="0" opacity="0.45"/>
<rect x="225.05" y="392.4" width="10.18" height="0.60" fill="#333" rx="0" opacity="0.45"/>
<rect x="236.21" y="392.4" width="5.54" height="0.60" fill="#333" rx="0" opacity="0.45"/>
<rect x="242.73" y="392.4" width="4.27" height="0.60" fill="#333" rx="0" opacity="0.45"/>
<rect x="209.8" y="394.3" width="10.93" height="0.60" fill="#333" rx="0" opacity="0.45"/>
<rect x="221.66" y="394.3" width="5.13" height="0.60" fill="#333" rx="0" opacity="0.45"/>
<rect x="227.56" y="394.3" width="7.61" height="0.60" fill="#333" rx="0" opacity="0.45"/>
<rect x="235.91" y="394.3" width="5.09" height="0.60" fill="#333" rx="0" opacity="0.45"/>
<rect x="209.8" y="396.2" width="9.06" height="0.60" fill="#333" rx="0" opacity="0.45"/>
<rect x="219.46" y="396.2" width="7.88" height="0.60" fill="#333" rx="0" opacity="0.45"/>
<rect x="228.12" y="396.2" width="4.12" height="0.60" fill="#333" rx="0" opacity="0.45"/>
<rect x="232.98" y="396.2" width="2.02" height="0.60" fill="#333" rx="0" opacity="0.45"/>
<rect x="209.8" y="398.1" width="4.45" height="0.60" fill="#333" rx="0" opacity="0.45"/>
<rect x="215.24" y="398.1" width="9.52" height="0.60" fill="#333" rx="0" opacity="0.45"/>
<rect x="225.75" y="398.1" width="4.73" height="0.60" fill="#333" rx="0" opacity="0.45"/>
<rect x="231.19" y="398.1" width="4.28" height="0.60" fill="#333" rx="0" opacity="0.45"/>
<rect x="236.38" y="398.1" width="5.89" height="0.60" fill="#333" rx="0" opacity="0.45"/>
<rect x="242.92" y="398.1" width="4.08" height="0.60" fill="#333" rx="0" opacity="0.45"/>
<text x="173.8" y="426.4" font-size="9.6" fill="#444444" font-weight="400" textLength="5.4" lengthAdjust="spacingAndGlyphs">5</text>
<rect x="187.9" y="419.1" width="65.50" height="37.20" fill="#d0d0d0" rx="0" />
<rect x="188.4" y="419.6" width="64.50" height="36.20" fill="url(#thbg)" rx="0" />
<rect x="205" y="424.0" width="9.73" height="0.80" fill="#333" rx="0" opacity="0.6"/>
<rect x="215.44" y="424.0" width="5.04" height="0.80" fill="#333" rx="0" opacity="0.6"/>
<rect x="221.45" y="424.0" width="7.99" height="0.80" fill="#333" rx="0" opacity="0.6"/>
<rect x="230.32" y="424.0" width="4.63" height="0.80" fill="#333" rx="0" opacity="0.6"/>
<rect x="235.57" y="424.0" width="7.43" height="0.80" fill="#333" rx="0" opacity="0.6"/>
<rect x="212" y="426.0" width="4.51" height="0.80" fill="#333" rx="0" opacity="0.6"/>
<rect x="217.48" y="426.0" width="8.44" height="0.80" fill="#333" rx="0" opacity="0.6"/>
<rect x="226.84" y="426.0" width="4.59" height="0.80" fill="#333" rx="0" opacity="0.6"/>
<rect x="232.37" y="426.0" width="1.63" height="0.80" fill="#333" rx="0" opacity="0.6"/>
<rect x="194" y="429.0" width="6.00" height="0.70" fill="#333" rx="0" opacity="0.33"/>
<rect x="198" y="431.0" width="7.87" height="0.70" fill="#333" rx="0" opacity="0.33"/>
<rect x="206.84" y="431.0" width="5.88" height="0.70" fill="#333" rx="0" opacity="0.33"/>
<rect x="213.37" y="431.0" width="7.69" height="0.70" fill="#333" rx="0" opacity="0.33"/>
<rect x="221.75" y="431.0" width="4.77" height="0.70" fill="#333" rx="0" opacity="0.33"/>
<rect x="227.18" y="431.0" width="4.36" height="0.70" fill="#333" rx="0" opacity="0.33"/>
<rect x="232.22" y="431.0" width="6.18" height="0.70" fill="#333" rx="0" opacity="0.33"/>
<rect x="239.12" y="431.0" width="5.88" height="0.70" fill="#333" rx="0" opacity="0.33"/>
<rect x="198" y="432.6" width="7.50" height="0.70" fill="#333" rx="0" opacity="0.33"/>
<rect x="206.17" y="432.6" width="6.43" height="0.70" fill="#333" rx="0" opacity="0.33"/>
<rect x="213.21" y="432.6" width="5.75" height="0.70" fill="#333" rx="0" opacity="0.33"/>
<rect x="219.57" y="432.6" width="9.13" height="0.70" fill="#333" rx="0" opacity="0.33"/>
<rect x="229.52" y="432.6" width="5.33" height="0.70" fill="#333" rx="0" opacity="0.33"/>
<rect x="235.64" y="432.6" width="4.36" height="0.70" fill="#333" rx="0" opacity="0.33"/>
<rect x="198" y="434.4" width="9.73" height="0.70" fill="#333" rx="0" opacity="0.33"/>
<rect x="208.51" y="434.4" width="7.46" height="0.70" fill="#333" rx="0" opacity="0.33"/>
<rect x="216.9" y="434.4" width="6.76" height="0.70" fill="#333" rx="0" opacity="0.33"/>
<rect x="224.46" y="434.4" width="8.81" height="0.70" fill="#333" rx="0" opacity="0.33"/>
<rect x="234.27" y="434.4" width="6.39" height="0.70" fill="#333" rx="0" opacity="0.33"/>
<rect x="241.6" y="434.4" width="4.40" height="0.70" fill="#333" rx="0" opacity="0.33"/>
<rect x="198" y="436.2" width="6.83" height="0.70" fill="#333" rx="0" opacity="0.33"/>
<rect x="205.57" y="436.2" width="4.38" height="0.70" fill="#333" rx="0" opacity="0.33"/>
<rect x="210.6" y="436.2" width="4.50" height="0.70" fill="#333" rx="0" opacity="0.33"/>
<rect x="216.0" y="436.2" width="5.79" height="0.70" fill="#333" rx="0" opacity="0.33"/>
<rect x="222.45" y="436.2" width="4.59" height="0.70" fill="#333" rx="0" opacity="0.33"/>
<rect x="227.98" y="436.2" width="8.02" height="0.70" fill="#333" rx="0" opacity="0.33"/>
<rect x="194" y="439.2" width="5.00" height="0.70" fill="#333" rx="0" opacity="0.33"/>
<rect x="198" y="441.2" width="6.05" height="0.70" fill="#333" rx="0" opacity="0.33"/>
<rect x="204.84" y="441.2" width="5.10" height="0.70" fill="#333" rx="0" opacity="0.33"/>
<rect x="210.72" y="441.2" width="5.84" height="0.70" fill="#333" rx="0" opacity="0.33"/>
<rect x="217.54" y="441.2" width="10.81" height="0.70" fill="#333" rx="0" opacity="0.33"/>
<rect x="229.17" y="441.2" width="5.71" height="0.70" fill="#333" rx="0" opacity="0.33"/>
<rect x="235.87" y="441.2" width="6.17" height="0.70" fill="#333" rx="0" opacity="0.33"/>
<rect x="242.78" y="441.2" width="3.22" height="0.70" fill="#333" rx="0" opacity="0.33"/>
<rect x="198" y="443.0" width="7.32" height="0.70" fill="#333" rx="0" opacity="0.33"/>
<rect x="206.12" y="443.0" width="5.41" height="0.70" fill="#333" rx="0" opacity="0.33"/>
<rect x="212.33" y="443.0" width="4.04" height="0.70" fill="#333" rx="0" opacity="0.33"/>
<rect x="217.07" y="443.0" width="4.63" height="0.70" fill="#333" rx="0" opacity="0.33"/>
<rect x="222.46" y="443.0" width="4.29" height="0.70" fill="#333" rx="0" opacity="0.33"/>
<rect x="227.36" y="443.0" width="3.64" height="0.70" fill="#333" rx="0" opacity="0.33"/>
<rect x="198" y="445.0" width="8.10" height="0.70" fill="#333" rx="0" opacity="0.33"/>
<rect x="206.91" y="445.0" width="9.25" height="0.70" fill="#333" rx="0" opacity="0.33"/>
<rect x="217.03" y="445.0" width="9.01" height="0.70" fill="#333" rx="0" opacity="0.33"/>
<rect x="226.99" y="445.0" width="6.73" height="0.70" fill="#333" rx="0" opacity="0.33"/>
<rect x="234.45" y="445.0" width="10.89" height="0.70" fill="#333" rx="0" opacity="0.33"/>
<rect x="198" y="446.8" width="9.07" height="0.70" fill="#333" rx="0" opacity="0.33"/>
<rect x="207.93" y="446.8" width="4.30" height="0.70" fill="#333" rx="0" opacity="0.33"/>
<rect x="213.17" y="446.8" width="10.24" height="0.70" fill="#333" rx="0" opacity="0.33"/>
<rect x="224.26" y="446.8" width="1.74" height="0.70" fill="#333" rx="0" opacity="0.33"/>
<text x="173.8" y="476.1" font-size="9.6" fill="#444444" font-weight="400" textLength="5.4" lengthAdjust="spacingAndGlyphs">6</text>
<rect x="187.9" y="468.8" width="65.50" height="37.20" fill="#d0d0d0" rx="0" />
<rect x="188.4" y="469.3" width="64.50" height="36.20" fill="url(#thbg)" rx="0" />
<rect x="212" y="474.9" width="4.98" height="0.80" fill="#333" rx="0" opacity="0.6"/>
<rect x="217.78" y="474.9" width="7.54" height="0.80" fill="#333" rx="0" opacity="0.6"/>
<rect x="226.25" y="474.9" width="6.75" height="0.80" fill="#333" rx="0" opacity="0.6"/>
<rect x="194" y="479.3" width="8.09" height="0.70" fill="#333" rx="0" opacity="0.33"/>
<rect x="203.05" y="479.3" width="1.95" height="0.70" fill="#333" rx="0" opacity="0.33"/>
<rect x="198" y="481.3" width="5.61" height="0.70" fill="#333" rx="0" opacity="0.33"/>
<rect x="204.22" y="481.3" width="4.93" height="0.70" fill="#333" rx="0" opacity="0.33"/>
<rect x="209.9" y="481.3" width="4.73" height="0.70" fill="#333" rx="0" opacity="0.33"/>
<rect x="215.57" y="481.3" width="7.91" height="0.70" fill="#333" rx="0" opacity="0.33"/>
<rect x="224.33" y="481.3" width="8.38" height="0.70" fill="#333" rx="0" opacity="0.33"/>
<rect x="233.58" y="481.3" width="7.43" height="0.70" fill="#333" rx="0" opacity="0.33"/>
<rect x="241.61" y="481.3" width="1.39" height="0.70" fill="#333" rx="0" opacity="0.33"/>
<rect x="198" y="483.1" width="7.52" height="0.70" fill="#333" rx="0" opacity="0.33"/>
<rect x="206.33" y="483.1" width="8.62" height="0.70" fill="#333" rx="0" opacity="0.33"/>
<rect x="215.58" y="483.1" width="8.42" height="0.70" fill="#333" rx="0" opacity="0.33"/>
<rect x="198" y="485.1" width="4.52" height="0.70" fill="#333" rx="0" opacity="0.33"/>
<rect x="203.23" y="485.1" width="9.10" height="0.70" fill="#333" rx="0" opacity="0.33"/>
<rect x="213.01" y="485.1" width="9.18" height="0.70" fill="#333" rx="0" opacity="0.33"/>
<rect x="223.18" y="485.1" width="7.46" height="0.70" fill="#333" rx="0" opacity="0.33"/>
<rect x="231.39" y="485.1" width="4.61" height="0.70" fill="#333" rx="0" opacity="0.33"/>
<rect x="198" y="486.9" width="9.37" height="0.70" fill="#333" rx="0" opacity="0.33"/>
<rect x="208.22" y="486.9" width="8.49" height="0.70" fill="#333" rx="0" opacity="0.33"/>
<rect x="217.35" y="486.9" width="5.03" height="0.70" fill="#333" rx="0" opacity="0.33"/>
<rect x="223.08" y="486.9" width="4.92" height="0.70" fill="#333" rx="0" opacity="0.33"/>
<rect x="194" y="489.7" width="7.97" height="0.70" fill="#333" rx="0" opacity="0.33"/>
<rect x="202.58" y="489.7" width="1.42" height="0.70" fill="#333" rx="0" opacity="0.33"/>
<rect x="198" y="491.9" width="8.70" height="0.70" fill="#333" rx="0" opacity="0.33"/>
<rect x="207.58" y="491.9" width="8.73" height="0.70" fill="#333" rx="0" opacity="0.33"/>
<rect x="217.03" y="491.9" width="7.61" height="0.70" fill="#333" rx="0" opacity="0.33"/>
<rect x="225.43" y="491.9" width="7.26" height="0.70" fill="#333" rx="0" opacity="0.33"/>
<rect x="233.34" y="491.9" width="10.26" height="0.70" fill="#333" rx="0" opacity="0.33"/>
<rect x="244.28" y="491.9" width="1.72" height="0.70" fill="#333" rx="0" opacity="0.33"/>
<rect x="198" y="493.7" width="4.12" height="0.70" fill="#333" rx="0" opacity="0.33"/>
<rect x="202.91" y="493.7" width="9.74" height="0.70" fill="#333" rx="0" opacity="0.33"/>
<rect x="213.63" y="493.7" width="7.15" height="0.70" fill="#333" rx="0" opacity="0.33"/>
<rect x="221.49" y="493.7" width="0.51" height="0.70" fill="#333" rx="0" opacity="0.33"/>
<text x="173.8" y="525.8" font-size="9.6" fill="#444444" font-weight="400" textLength="5.4" lengthAdjust="spacingAndGlyphs">7</text>
<rect x="187.9" y="518.5" width="65.50" height="37.20" fill="#d0d0d0" rx="0" />
<rect x="188.4" y="519.0" width="64.50" height="36.20" fill="url(#thbg)" rx="0" />
<rect x="195" y="523.4" width="5.47" height="0.80" fill="#333" rx="0" opacity="0.6"/>
<rect x="201.31" y="523.4" width="4.99" height="0.80" fill="#333" rx="0" opacity="0.6"/>
<rect x="207.11" y="523.4" width="10.67" height="0.80" fill="#333" rx="0" opacity="0.6"/>
<rect x="218.43" y="523.4" width="9.74" height="0.80" fill="#333" rx="0" opacity="0.6"/>
<rect x="228.98" y="523.4" width="10.20" height="0.80" fill="#333" rx="0" opacity="0.6"/>
<rect x="240.07" y="523.4" width="5.62" height="0.80" fill="#333" rx="0" opacity="0.6"/>
<rect x="211" y="525.4" width="7.40" height="0.80" fill="#333" rx="0" opacity="0.6"/>
<rect x="219.01" y="525.4" width="2.99" height="0.80" fill="#333" rx="0" opacity="0.6"/>
<rect x="195" y="529.6" width="7.16" height="0.70" fill="#333" rx="0" opacity="0.33"/>
<rect x="202.88" y="529.6" width="4.98" height="0.70" fill="#333" rx="0" opacity="0.33"/>
<rect x="208.6" y="529.6" width="6.21" height="0.70" fill="#333" rx="0" opacity="0.33"/>
<rect x="215.75" y="529.6" width="4.01" height="0.70" fill="#333" rx="0" opacity="0.33"/>
<rect x="220.66" y="529.6" width="9.87" height="0.70" fill="#333" rx="0" opacity="0.33"/>
<rect x="231.18" y="529.6" width="10.49" height="0.70" fill="#333" rx="0" opacity="0.33"/>
<rect x="242.55" y="529.6" width="3.45" height="0.70" fill="#333" rx="0" opacity="0.33"/>
<rect x="195" y="531.4" width="6.61" height="0.70" fill="#333" rx="0" opacity="0.33"/>
<rect x="202.36" y="531.4" width="10.99" height="0.70" fill="#333" rx="0" opacity="0.33"/>
<rect x="214.19" y="531.4" width="0.81" height="0.70" fill="#333" rx="0" opacity="0.33"/>
<rect x="195" y="534.6" width="5.93" height="0.70" fill="#333" rx="0" opacity="0.33"/>
<rect x="201.55" y="534.6" width="4.71" height="0.70" fill="#333" rx="0" opacity="0.33"/>
<rect x="207.19" y="534.6" width="6.00" height="0.70" fill="#333" rx="0" opacity="0.33"/>
<rect x="214.16" y="534.6" width="5.75" height="0.70" fill="#333" rx="0" opacity="0.33"/>
<rect x="220.62" y="534.6" width="7.57" height="0.70" fill="#333" rx="0" opacity="0.33"/>
<rect x="228.87" y="534.6" width="6.61" height="0.70" fill="#333" rx="0" opacity="0.33"/>
<rect x="236.46" y="534.6" width="9.54" height="0.70" fill="#333" rx="0" opacity="0.33"/>
<rect x="195" y="536.4" width="8.42" height="0.70" fill="#333" rx="0" opacity="0.33"/>
<rect x="204.38" y="536.4" width="10.59" height="0.70" fill="#333" rx="0" opacity="0.33"/>
<rect x="215.79" y="536.4" width="9.03" height="0.70" fill="#333" rx="0" opacity="0.33"/>
<rect x="225.44" y="536.4" width="9.13" height="0.70" fill="#333" rx="0" opacity="0.33"/>
<rect x="235.35" y="536.4" width="9.27" height="0.70" fill="#333" rx="0" opacity="0.33"/>
<rect x="245.48" y="536.4" width="0.52" height="0.70" fill="#333" rx="0" opacity="0.33"/>
<rect x="195" y="538.2" width="10.49" height="0.70" fill="#333" rx="0" opacity="0.33"/>
<rect x="206.14" y="538.2" width="7.30" height="0.70" fill="#333" rx="0" opacity="0.33"/>
<rect x="214.18" y="538.2" width="6.09" height="0.70" fill="#333" rx="0" opacity="0.33"/>
<rect x="221.16" y="538.2" width="10.84" height="0.70" fill="#333" rx="0" opacity="0.33"/>
<rect x="232.7" y="538.2" width="5.30" height="0.70" fill="#333" rx="0" opacity="0.33"/>
<rect x="195" y="541.4" width="7.90" height="0.70" fill="#333" rx="0" opacity="0.33"/>
<rect x="203.66" y="541.4" width="5.17" height="0.70" fill="#333" rx="0" opacity="0.33"/>
<rect x="209.49" y="541.4" width="5.46" height="0.70" fill="#333" rx="0" opacity="0.33"/>
<rect x="215.91" y="541.4" width="7.48" height="0.70" fill="#333" rx="0" opacity="0.33"/>
<rect x="224.08" y="541.4" width="10.34" height="0.70" fill="#333" rx="0" opacity="0.33"/>
<rect x="235.42" y="541.4" width="7.15" height="0.70" fill="#333" rx="0" opacity="0.33"/>
<rect x="243.23" y="541.4" width="2.77" height="0.70" fill="#333" rx="0" opacity="0.33"/>
<rect x="195" y="543.2" width="6.39" height="0.70" fill="#333" rx="0" opacity="0.33"/>
<rect x="202.03" y="543.2" width="5.67" height="0.70" fill="#333" rx="0" opacity="0.33"/>
<rect x="208.41" y="543.2" width="7.59" height="0.70" fill="#333" rx="0" opacity="0.33"/>
<text x="173.8" y="575.5" font-size="9.6" fill="#c35229" font-weight="400" textLength="5.4" lengthAdjust="spacingAndGlyphs">8</text>
<rect x="186.7" y="568.1" width="68.50" height="38.00" fill="none" rx="0" stroke="#c35229" stroke-width="2"/>
<rect x="188.4" y="568.7" width="64.50" height="36.20" fill="url(#thbg)" rx="0" />
<rect x="213" y="573.3" width="9.25" height="1.10" fill="#333" rx="0" opacity="0.8"/>
<rect x="223.01" y="573.3" width="6.90" height="1.10" fill="#333" rx="0" opacity="0.8"/>
<rect x="230.72" y="573.3" width="1.28" height="1.10" fill="#333" rx="0" opacity="0.8"/>
<rect x="193.6" y="576.3000000000001" width="52.80" height="1.80" fill="#2196f3" rx="0" />
<rect x="193.6" y="578.1" width="6.80" height="19.20" fill="#2196f3" rx="0" />
<rect x="200.4" y="578.1" width="46.00" height="19.20" fill="#d2e3f6" rx="0" />
<rect x="201.4" y="579.5" width="4.43" height="0.60" fill="#333" rx="0" opacity="0.45"/>
<rect x="206.55" y="579.5" width="10.77" height="0.60" fill="#333" rx="0" opacity="0.45"/>
<rect x="217.97" y="579.5" width="4.43" height="0.60" fill="#333" rx="0" opacity="0.45"/>
<rect x="224.4" y="579.5" width="10.04" height="0.60" fill="#333" rx="0" opacity="0.45"/>
<rect x="235.13" y="579.5" width="5.89" height="0.60" fill="#333" rx="0" opacity="0.45"/>
<rect x="241.72" y="579.5" width="3.68" height="0.60" fill="#333" rx="0" opacity="0.45"/>
<rect x="201.4" y="581.39" width="10.68" height="0.60" fill="#333" rx="0" opacity="0.45"/>
<rect x="213.02" y="581.39" width="6.38" height="0.60" fill="#333" rx="0" opacity="0.45"/>
<rect x="224.4" y="581.39" width="4.23" height="0.60" fill="#333" rx="0" opacity="0.45"/>
<rect x="229.51" y="581.39" width="10.27" height="0.60" fill="#333" rx="0" opacity="0.45"/>
<rect x="201.4" y="583.28" width="8.11" height="0.60" fill="#333" rx="0" opacity="0.45"/>
<rect x="210.11" y="583.28" width="6.29" height="0.60" fill="#333" rx="0" opacity="0.45"/>
<rect x="224.4" y="583.28" width="9.78" height="0.60" fill="#333" rx="0" opacity="0.45"/>
<rect x="235.12" y="583.28" width="10.28" height="0.60" fill="#333" rx="0" opacity="0.45"/>
<rect x="201.4" y="585.17" width="4.76" height="0.60" fill="#333" rx="0" opacity="0.45"/>
<rect x="206.83" y="585.17" width="7.65" height="0.60" fill="#333" rx="0" opacity="0.45"/>
<rect x="215.35" y="585.17" width="7.05" height="0.60" fill="#333" rx="0" opacity="0.45"/>
<rect x="224.4" y="585.17" width="8.53" height="0.60" fill="#333" rx="0" opacity="0.45"/>
<rect x="233.84" y="585.17" width="6.56" height="0.60" fill="#333" rx="0" opacity="0.45"/>
<rect x="201.4" y="587.06" width="4.28" height="0.60" fill="#333" rx="0" opacity="0.45"/>
<rect x="206.59" y="587.06" width="5.63" height="0.60" fill="#333" rx="0" opacity="0.45"/>
<rect x="213.19" y="587.06" width="6.21" height="0.60" fill="#333" rx="0" opacity="0.45"/>
<rect x="224.4" y="587.06" width="4.90" height="0.60" fill="#333" rx="0" opacity="0.45"/>
<rect x="230.0" y="587.06" width="8.45" height="0.60" fill="#333" rx="0" opacity="0.45"/>
<rect x="239.33" y="587.06" width="4.78" height="0.60" fill="#333" rx="0" opacity="0.45"/>
<rect x="244.74" y="587.06" width="0.66" height="0.60" fill="#333" rx="0" opacity="0.45"/>
<rect x="201.4" y="588.94" width="6.72" height="0.60" fill="#333" rx="0" opacity="0.45"/>
<rect x="208.81" y="588.94" width="7.59" height="0.60" fill="#333" rx="0" opacity="0.45"/>
<rect x="224.4" y="588.94" width="6.11" height="0.60" fill="#333" rx="0" opacity="0.45"/>
<rect x="231.29" y="588.94" width="9.11" height="0.60" fill="#333" rx="0" opacity="0.45"/>
<rect x="201.4" y="590.83" width="10.19" height="0.60" fill="#333" rx="0" opacity="0.45"/>
<rect x="212.38" y="590.83" width="5.64" height="0.60" fill="#333" rx="0" opacity="0.45"/>
<rect x="218.72" y="590.83" width="3.68" height="0.60" fill="#333" rx="0" opacity="0.45"/>
<rect x="224.4" y="590.83" width="6.15" height="0.60" fill="#333" rx="0" opacity="0.45"/>
<rect x="231.16" y="590.83" width="7.49" height="0.60" fill="#333" rx="0" opacity="0.45"/>
<rect x="239.52" y="590.83" width="5.88" height="0.60" fill="#333" rx="0" opacity="0.45"/>
<rect x="201.4" y="592.72" width="8.67" height="0.60" fill="#333" rx="0" opacity="0.45"/>
<rect x="211.04" y="592.72" width="5.59" height="0.60" fill="#333" rx="0" opacity="0.45"/>
<rect x="217.24" y="592.72" width="2.16" height="0.60" fill="#333" rx="0" opacity="0.45"/>
<rect x="224.4" y="592.72" width="8.78" height="0.60" fill="#333" rx="0" opacity="0.45"/>
<rect x="233.86" y="592.72" width="6.54" height="0.60" fill="#333" rx="0" opacity="0.45"/>
<rect x="201.4" y="594.61" width="7.53" height="0.60" fill="#333" rx="0" opacity="0.45"/>
<rect x="209.62" y="594.61" width="6.78" height="0.60" fill="#333" rx="0" opacity="0.45"/>
<rect x="224.4" y="594.61" width="9.74" height="0.60" fill="#333" rx="0" opacity="0.45"/>
<rect x="234.83" y="594.61" width="5.55" height="0.60" fill="#333" rx="0" opacity="0.45"/>
<rect x="241.29" y="594.61" width="4.11" height="0.60" fill="#333" rx="0" opacity="0.45"/>
<text x="173.8" y="625.2" font-size="9.6" fill="#444444" font-weight="400" textLength="5.4" lengthAdjust="spacingAndGlyphs">9</text>
<rect x="187.9" y="617.9000000000001" width="65.50" height="37.20" fill="#d0d0d0" rx="0" />
<rect x="188.4" y="618.4000000000001" width="64.50" height="36.20" fill="url(#thbg)" rx="0" />
<rect x="195" y="623.0" width="7.47" height="0.80" fill="#8a6a30" rx="0" opacity="0.5"/>
<rect x="203.15" y="623.0" width="5.56" height="0.80" fill="#8a6a30" rx="0" opacity="0.5"/>
<rect x="209.48" y="623.0" width="8.65" height="0.80" fill="#8a6a30" rx="0" opacity="0.5"/>
<rect x="219.11" y="623.0" width="5.03" height="0.80" fill="#8a6a30" rx="0" opacity="0.5"/>
<rect x="224.89" y="623.0" width="5.49" height="0.80" fill="#8a6a30" rx="0" opacity="0.5"/>
<rect x="231.37" y="623.0" width="5.00" height="0.80" fill="#8a6a30" rx="0" opacity="0.5"/>
<rect x="236.99" y="623.0" width="4.42" height="0.80" fill="#8a6a30" rx="0" opacity="0.5"/>
<rect x="242.17" y="623.0" width="3.83" height="0.80" fill="#8a6a30" rx="0" opacity="0.5"/>
<rect x="195" y="627.0" width="9.13" height="0.70" fill="#333" rx="0" opacity="0.33"/>
<rect x="205.13" y="627.0" width="10.52" height="0.70" fill="#333" rx="0" opacity="0.33"/>
<rect x="216.38" y="627.0" width="5.30" height="0.70" fill="#333" rx="0" opacity="0.33"/>
<rect x="222.65" y="627.0" width="9.23" height="0.70" fill="#333" rx="0" opacity="0.33"/>
<rect x="232.49" y="627.0" width="8.65" height="0.70" fill="#333" rx="0" opacity="0.33"/>
<rect x="241.89" y="627.0" width="4.11" height="0.70" fill="#333" rx="0" opacity="0.33"/>
<rect x="195" y="628.8" width="5.18" height="0.70" fill="#333" rx="0" opacity="0.33"/>
<rect x="200.79" y="628.8" width="5.95" height="0.70" fill="#333" rx="0" opacity="0.33"/>
<rect x="207.49" y="628.8" width="10.68" height="0.70" fill="#333" rx="0" opacity="0.33"/>
<rect x="218.82" y="628.8" width="10.75" height="0.70" fill="#333" rx="0" opacity="0.33"/>
<rect x="230.26" y="628.8" width="5.74" height="0.70" fill="#333" rx="0" opacity="0.33"/>
<rect x="195" y="631.8" width="9.75" height="0.70" fill="#333" rx="0" opacity="0.33"/>
<rect x="205.53" y="631.8" width="4.34" height="0.70" fill="#333" rx="0" opacity="0.33"/>
<rect x="210.66" y="631.8" width="6.61" height="0.70" fill="#333" rx="0" opacity="0.33"/>
<rect x="218.24" y="631.8" width="5.35" height="0.70" fill="#333" rx="0" opacity="0.33"/>
<rect x="224.33" y="631.8" width="10.28" height="0.70" fill="#333" rx="0" opacity="0.33"/>
<rect x="235.23" y="631.8" width="6.87" height="0.70" fill="#333" rx="0" opacity="0.33"/>
<rect x="243.03" y="631.8" width="2.97" height="0.70" fill="#333" rx="0" opacity="0.33"/>
<rect x="195" y="633.6" width="4.24" height="0.70" fill="#333" rx="0" opacity="0.33"/>
<rect x="199.87" y="633.6" width="10.44" height="0.70" fill="#333" rx="0" opacity="0.33"/>
<rect x="211.01" y="633.6" width="9.23" height="0.70" fill="#333" rx="0" opacity="0.33"/>
<rect x="221.2" y="633.6" width="0.80" height="0.70" fill="#333" rx="0" opacity="0.33"/>
<rect x="195" y="636.6" width="10.70" height="0.70" fill="#333" rx="0" opacity="0.33"/>
<rect x="206.55" y="636.6" width="5.84" height="0.70" fill="#333" rx="0" opacity="0.33"/>
<rect x="213.27" y="636.6" width="6.22" height="0.70" fill="#333" rx="0" opacity="0.33"/>
<rect x="220.2" y="636.6" width="4.02" height="0.70" fill="#333" rx="0" opacity="0.33"/>
<rect x="225.13" y="636.6" width="10.41" height="0.70" fill="#333" rx="0" opacity="0.33"/>
<rect x="236.4" y="636.6" width="9.60" height="0.70" fill="#333" rx="0" opacity="0.33"/>
<rect x="195" y="638.4" width="5.64" height="0.70" fill="#333" rx="0" opacity="0.33"/>
<rect x="201.43" y="638.4" width="10.69" height="0.70" fill="#333" rx="0" opacity="0.33"/>
<rect x="213.11" y="638.4" width="6.70" height="0.70" fill="#333" rx="0" opacity="0.33"/>
<rect x="220.51" y="638.4" width="7.01" height="0.70" fill="#333" rx="0" opacity="0.33"/>
<rect x="228.32" y="638.4" width="10.50" height="0.70" fill="#333" rx="0" opacity="0.33"/>
<rect x="239.49" y="638.4" width="6.51" height="0.70" fill="#333" rx="0" opacity="0.33"/>
<rect x="195" y="640.2" width="9.76" height="0.70" fill="#333" rx="0" opacity="0.33"/>
<rect x="205.67" y="640.2" width="8.25" height="0.70" fill="#333" rx="0" opacity="0.33"/>
<rect x="214.65" y="640.2" width="6.24" height="0.70" fill="#333" rx="0" opacity="0.33"/>
<rect x="221.63" y="640.2" width="9.48" height="0.70" fill="#333" rx="0" opacity="0.33"/>
<rect x="231.74" y="640.2" width="0.26" height="0.70" fill="#333" rx="0" opacity="0.33"/>
<rect x="195" y="643.2" width="5.73" height="0.70" fill="#333" rx="0" opacity="0.33"/>
<rect x="201.36" y="643.2" width="4.23" height="0.70" fill="#333" rx="0" opacity="0.33"/>
<rect x="206.42" y="643.2" width="6.28" height="0.70" fill="#333" rx="0" opacity="0.33"/>
<rect x="213.69" y="643.2" width="10.18" height="0.70" fill="#333" rx="0" opacity="0.33"/>
<rect x="224.87" y="643.2" width="5.85" height="0.70" fill="#333" rx="0" opacity="0.33"/>
<rect x="231.35" y="643.2" width="4.68" height="0.70" fill="#333" rx="0" opacity="0.33"/>
<rect x="236.83" y="643.2" width="8.97" height="0.70" fill="#333" rx="0" opacity="0.33"/>
<rect x="195" y="645.0" width="5.64" height="0.70" fill="#333" rx="0" opacity="0.33"/>
<rect x="201.41" y="645.0" width="8.34" height="0.70" fill="#333" rx="0" opacity="0.33"/>
<rect x="210.62" y="645.0" width="5.38" height="0.70" fill="#333" rx="0" opacity="0.33"/>
<rect x="1080.6" y="173.2" width="96.20" height="72.40" fill="url(#tileA)" rx="4" stroke="#383838" stroke-width="0.8"/>
<rect x="1180.8" y="173.2" width="96.20" height="72.40" fill="url(#tileB)" rx="4" stroke="#383838" stroke-width="0.8"/>
<rect x="1080.6" y="248.3" width="96.20" height="72.10" fill="url(#tileC)" rx="4" stroke="#383838" stroke-width="0.8"/>
<rect x="1180.8" y="248.3" width="96.20" height="72.10" fill="url(#tileA)" rx="4" stroke="#383838" stroke-width="0.8"/>
<rect x="1080.6" y="323.4" width="96.20" height="72.10" fill="url(#tileA)" rx="4" stroke="#383838" stroke-width="0.8"/>
<rect x="1180.8" y="323.4" width="96.20" height="72.10" fill="url(#tileB)" rx="4" stroke="#383838" stroke-width="0.8"/>
<rect x="1080.6" y="398.5" width="96.20" height="72.10" fill="url(#tileA)" rx="4" stroke="#383838" stroke-width="0.8"/>
<rect x="1180.8" y="398.5" width="96.20" height="72.10" fill="url(#tileA)" rx="4" stroke="#383838" stroke-width="0.8"/>
<rect x="1080.6" y="473.8" width="196.40" height="109.00" fill="url(#tileBig)" rx="4" stroke="#383838" stroke-width="0.8"/>
<rect x="1081.4" y="174.2" width="94.80" height="70.60" fill="none" rx="4" stroke="#7f85f5" stroke-width="2.2"/>
<rect x="1183.3999999999999" y="222.6" width="23.00" height="19.40" fill="#161616" rx="2.5" opacity="0.92"/>
<path d="M1193.3 228.7 Q1193.3 227.29999999999998 1194.8999999999999 227.29999999999998 Q1196.4999999999998 227.29999999999998 1196.4999999999998 228.7 V232.7 Q1196.4999999999998 234.29999999999998 1194.8999999999999 234.29999999999998 Q1193.3 234.29999999999998 1193.3 232.7 Z" stroke="none" fill="#e8e8e8" stroke-width="1" />
<path d="M1191.4999999999998 231.7 Q1191.4999999999998 235.89999999999998 1194.8999999999999 235.89999999999998 Q1198.3 235.89999999999998 1198.3 231.7 M1194.8999999999999 235.89999999999998 V237.7" stroke="#e8e8e8" fill="none" stroke-width="0.9" />
<line x1="1189.8999999999999" y1="227.29999999999998" x2="1199.8999999999999" y2="237.89999999999998" stroke="#161616" stroke-width="2" />
<line x1="1189.8999999999999" y1="227.29999999999998" x2="1199.8999999999999" y2="237.89999999999998" stroke="#e8e8e8" stroke-width="0.9" />
<rect x="1083.1999999999998" y="297.4" width="23.00" height="19.40" fill="#161616" rx="2.5" opacity="0.92"/>
<path d="M1093.1 303.49999999999994 Q1093.1 302.09999999999997 1094.6999999999998 302.09999999999997 Q1096.2999999999997 302.09999999999997 1096.2999999999997 303.49999999999994 V307.49999999999994 Q1096.2999999999997 309.09999999999997 1094.6999999999998 309.09999999999997 Q1093.1 309.09999999999997 1093.1 307.49999999999994 Z" stroke="none" fill="#e8e8e8" stroke-width="1" />
<path d="M1091.2999999999997 306.49999999999994 Q1091.2999999999997 310.7 1094.6999999999998 310.7 Q1098.1 310.7 1098.1 306.49999999999994 M1094.6999999999998 310.7 V312.49999999999994" stroke="#e8e8e8" fill="none" stroke-width="0.9" />
<line x1="1089.6999999999998" y1="302.09999999999997" x2="1099.6999999999998" y2="312.7" stroke="#161616" stroke-width="2" />
<line x1="1089.6999999999998" y1="302.09999999999997" x2="1099.6999999999998" y2="312.7" stroke="#e8e8e8" stroke-width="0.9" />
<rect x="1183.3999999999999" y="297.4" width="23.00" height="19.40" fill="#161616" rx="2.5" opacity="0.92"/>
<path d="M1193.3 303.49999999999994 Q1193.3 302.09999999999997 1194.8999999999999 302.09999999999997 Q1196.4999999999998 302.09999999999997 1196.4999999999998 303.49999999999994 V307.49999999999994 Q1196.4999999999998 309.09999999999997 1194.8999999999999 309.09999999999997 Q1193.3 309.09999999999997 1193.3 307.49999999999994 Z" stroke="none" fill="#e8e8e8" stroke-width="1" />
<path d="M1191.4999999999998 306.49999999999994 Q1191.4999999999998 310.7 1194.8999999999999 310.7 Q1198.3 310.7 1198.3 306.49999999999994 M1194.8999999999999 310.7 V312.49999999999994" stroke="#e8e8e8" fill="none" stroke-width="0.9" />
<line x1="1189.8999999999999" y1="302.09999999999997" x2="1199.8999999999999" y2="312.7" stroke="#161616" stroke-width="2" />
<line x1="1189.8999999999999" y1="302.09999999999997" x2="1199.8999999999999" y2="312.7" stroke="#e8e8e8" stroke-width="0.9" />
<rect x="1083.1999999999998" y="372.5" width="23.00" height="19.40" fill="#161616" rx="2.5" opacity="0.92"/>
<path d="M1093.1 378.59999999999997 Q1093.1 377.2 1094.6999999999998 377.2 Q1096.2999999999997 377.2 1096.2999999999997 378.59999999999997 V382.59999999999997 Q1096.2999999999997 384.2 1094.6999999999998 384.2 Q1093.1 384.2 1093.1 382.59999999999997 Z" stroke="none" fill="#e8e8e8" stroke-width="1" />
<path d="M1091.2999999999997 381.59999999999997 Q1091.2999999999997 385.8 1094.6999999999998 385.8 Q1098.1 385.8 1098.1 381.59999999999997 M1094.6999999999998 385.8 V387.59999999999997" stroke="#e8e8e8" fill="none" stroke-width="0.9" />
<line x1="1089.6999999999998" y1="377.2" x2="1099.6999999999998" y2="387.8" stroke="#161616" stroke-width="2" />
<line x1="1089.6999999999998" y1="377.2" x2="1099.6999999999998" y2="387.8" stroke="#e8e8e8" stroke-width="0.9" />
<rect x="1183.3999999999999" y="372.5" width="23.00" height="19.40" fill="#161616" rx="2.5" opacity="0.92"/>
<path d="M1193.3 378.59999999999997 Q1193.3 377.2 1194.8999999999999 377.2 Q1196.4999999999998 377.2 1196.4999999999998 378.59999999999997 V382.59999999999997 Q1196.4999999999998 384.2 1194.8999999999999 384.2 Q1193.3 384.2 1193.3 382.59999999999997 Z" stroke="none" fill="#e8e8e8" stroke-width="1" />
<path d="M1191.4999999999998 381.59999999999997 Q1191.4999999999998 385.8 1194.8999999999999 385.8 Q1198.3 385.8 1198.3 381.59999999999997 M1194.8999999999999 385.8 V387.59999999999997" stroke="#e8e8e8" fill="none" stroke-width="0.9" />
<line x1="1189.8999999999999" y1="377.2" x2="1199.8999999999999" y2="387.8" stroke="#161616" stroke-width="2" />
<line x1="1189.8999999999999" y1="377.2" x2="1199.8999999999999" y2="387.8" stroke="#e8e8e8" stroke-width="0.9" />
<rect x="1083.1999999999998" y="447.6" width="23.00" height="19.40" fill="#161616" rx="2.5" opacity="0.92"/>
<path d="M1093.1 453.7 Q1093.1 452.3 1094.6999999999998 452.3 Q1096.2999999999997 452.3 1096.2999999999997 453.7 V457.7 Q1096.2999999999997 459.3 1094.6999999999998 459.3 Q1093.1 459.3 1093.1 457.7 Z" stroke="none" fill="#e8e8e8" stroke-width="1" />
<path d="M1091.2999999999997 456.7 Q1091.2999999999997 460.90000000000003 1094.6999999999998 460.90000000000003 Q1098.1 460.90000000000003 1098.1 456.7 M1094.6999999999998 460.90000000000003 V462.7" stroke="#e8e8e8" fill="none" stroke-width="0.9" />
<line x1="1089.6999999999998" y1="452.3" x2="1099.6999999999998" y2="462.90000000000003" stroke="#161616" stroke-width="2" />
<line x1="1089.6999999999998" y1="452.3" x2="1099.6999999999998" y2="462.90000000000003" stroke="#e8e8e8" stroke-width="0.9" />
<rect x="1183.3999999999999" y="447.6" width="23.00" height="19.40" fill="#161616" rx="2.5" opacity="0.92"/>
<path d="M1193.3 453.7 Q1193.3 452.3 1194.8999999999999 452.3 Q1196.4999999999998 452.3 1196.4999999999998 453.7 V457.7 Q1196.4999999999998 459.3 1194.8999999999999 459.3 Q1193.3 459.3 1193.3 457.7 Z" stroke="none" fill="#e8e8e8" stroke-width="1" />
<path d="M1191.4999999999998 456.7 Q1191.4999999999998 460.90000000000003 1194.8999999999999 460.90000000000003 Q1198.3 460.90000000000003 1198.3 456.7 M1194.8999999999999 460.90000000000003 V462.7" stroke="#e8e8e8" fill="none" stroke-width="0.9" />
<line x1="1189.8999999999999" y1="452.3" x2="1199.8999999999999" y2="462.90000000000003" stroke="#161616" stroke-width="2" />
<line x1="1189.8999999999999" y1="452.3" x2="1199.8999999999999" y2="462.90000000000003" stroke="#e8e8e8" stroke-width="0.9" />
<rect x="1087" y="556.4" width="23.00" height="19.40" fill="#161616" rx="2.5" opacity="0.92"/>
<path d="M1096.9 562.5 Q1096.9 561.1 1098.5 561.1 Q1100.1 561.1 1100.1 562.5 V566.5 Q1100.1 568.1 1098.5 568.1 Q1096.9 568.1 1096.9 566.5 Z" stroke="none" fill="#e8e8e8" stroke-width="1" />
<path d="M1095.1 565.5 Q1095.1 569.7 1098.5 569.7 Q1101.9 569.7 1101.9 565.5 M1098.5 569.7 V571.5" stroke="#e8e8e8" fill="none" stroke-width="0.9" />
<line x1="1093.5" y1="561.1" x2="1103.5" y2="571.7" stroke="#161616" stroke-width="2" />
<line x1="1093.5" y1="561.1" x2="1103.5" y2="571.7" stroke="#e8e8e8" stroke-width="0.9" />
<circle cx="1129.3" cy="208.8" r="20.5" fill="#1a1a1a" stroke="none" stroke-width="1" opacity="0.6"/>
<g clip-path="url(#cl1)"><g filter="url(#avblur)"><rect x="1106.5" y="186.0" width="45.6" height="45.6" fill="url(#av1)"/><rect x="1109" y="186" width="22" height="17" fill="#d8e0c8"/><rect x="1112" y="190" width="12" height="10" fill="#a8c898"/><rect x="1133" y="186" width="18" height="36" fill="#c8b890"/><rect x="1138" y="186" width="4" height="36" fill="#a89060"/><rect x="1109" y="203" width="16" height="15" fill="#4a3428"/><ellipse cx="1132" cy="198" rx="3.6" ry="4.4" fill="#8a6850"/><path d="M1124 206 Q1132 201 1140 206 L1142 222 L1122 222 Z" fill="#1a2a48"/><rect x="1106" y="220" width="48" height="12" fill="#178a78"/><rect x="1119" y="217" width="8" height="9" fill="#e8e0a0"/><rect x="1133" y="215" width="7" height="5" fill="#e8d898"/></g></g>
<circle cx="1229.6" cy="209.3" r="20.5" fill="#1a1a1a" stroke="none" stroke-width="1" opacity="0.6"/>
<g clip-path="url(#cl2)"><g filter="url(#avblur)"><rect x="1206.8" y="186.5" width="45.6" height="45.6" fill="url(#av2)"/><rect x="1206" y="186" width="9" height="40" fill="#505848"/><path d="M1216 196 Q1226 184 1242 194 L1246 214 L1238 226 L1220 226 Z" fill="#b08a60"/><ellipse cx="1230" cy="207" rx="7.5" ry="9" fill="#e6b8a8"/><rect x="1240" y="188" width="10" height="12" fill="#3a2a22"/><path d="M1214 222 Q1228 214 1250 212 L1250 232 L1212 232 Z" fill="#e090a0"/><ellipse cx="1232" cy="228" rx="8" ry="4" fill="#f0d0d0"/></g></g>
<circle cx="1129.3" cy="284.3" r="20.5" fill="#1a1a1a" stroke="none" stroke-width="1" opacity="0.6"/>
<g clip-path="url(#cl3)"><g filter="url(#avblur)"><rect x="1106.5" y="261.5" width="45.6" height="45.6" fill="url(#av3)"/><ellipse cx="1134" cy="277" rx="10" ry="11" fill="#e0c8b8"/><path d="M1122 266 Q1134 258 1148 268 L1150 290 L1142 276 Q1134 270 1126 278 Z" fill="#f4f0e8"/><path d="M1134 292 L1152 284 L1152 302 L1138 304 Z" fill="#8090b8"/><path d="M1106 276 L1114 272 L1124 286 L1138 300 L1140 308 L1106 308 Z" fill="#4a9a28"/><circle cx="1116" cy="292" r="7" fill="#72b838"/><circle cx="1126" cy="302" r="5" fill="#5aa830"/></g></g>
<circle cx="1229.6" cy="284.3" r="20.5" fill="#1a1a1a" stroke="none" stroke-width="1" opacity="0.6"/>
<g clip-path="url(#cl4)"><g filter="url(#avblur)"><rect x="1206.8" y="261.5" width="45.6" height="45.6" fill="url(#av4)"/><rect x="1210" y="270" width="14" height="10" fill="#d8d8d8"/><ellipse cx="1222" cy="277" rx="6" ry="5" fill="#606060"/><path d="M1222 282 L1228 280 L1234 300 L1228 304 Z" fill="#1e1e1e"/><rect x="1233" y="268" width="11" height="24" fill="#2a2a2a"/><rect x="1235" y="271" width="7" height="17" fill="#d8d8d8"/><path d="M1208 286 L1222 292 L1226 306 L1208 306 Z" fill="#f0f0f0"/><rect x="1240" y="290" width="12" height="14" fill="#808080"/></g></g>
<circle cx="1129.3" cy="359.5" r="20.5" fill="#1a1a1a" stroke="none" stroke-width="1" opacity="0.6"/>
<g clip-path="url(#cl5)"><g filter="url(#avblur)"><rect x="1106.5" y="336.7" width="45.6" height="45.6" fill="url(#av5)"/><rect x1="0" x="1140" y="340" width="14" height="24" fill="#587878"/><ellipse cx="1147" cy="356" rx="4" ry="8" fill="#b05830"/><ellipse cx="1124" cy="360" rx="14" ry="18" fill="#c0a070"/><ellipse cx="1126" cy="354" rx="6.5" ry="8.5" fill="#e8c8b8"/><path d="M1114 372 Q1128 366 1146 370 L1146 382 L1112 382 Z" fill="#1e2a30"/><ellipse cx="1128" cy="371" rx="4" ry="3" fill="#e0c0b0"/></g></g>
<circle cx="1229.6" cy="359.5" r="20.5" fill="#1a1a1a" stroke="none" stroke-width="1" opacity="0.6"/>
<g clip-path="url(#cl6)"><g filter="url(#avblur)"><rect x="1206.8" y="336.7" width="45.6" height="45.6" fill="url(#av6)"/><rect x="1210" y="362" width="40" height="12" fill="#2a2a2c" opacity="0.6"/><circle cx="1222" cy="366" r="1.0" fill="#806068"/><circle cx="1232" cy="370" r="1.0" fill="#706068"/><circle cx="1240" cy="364" r="0.9" fill="#707078"/><circle cx="1216" cy="372" r="0.9" fill="#806068"/></g></g>
<circle cx="1128.4" cy="434.4" r="19.9" fill="#e6e2ef" stroke="none" stroke-width="1" />
<text x="1118.6" y="439.6" font-size="14.0" fill="#4b4a5c" font-weight="700" textLength="19.8" lengthAdjust="spacingAndGlyphs">БП</text>
<circle cx="1229.6" cy="434.5" r="20.5" fill="#1a1a1a" stroke="none" stroke-width="1" opacity="0.6"/>
<g clip-path="url(#cl7)"><g filter="url(#avblur)"><rect x="1206.8" y="411.7" width="45.6" height="45.6" fill="url(#av7)"/><path d="M1212 428 L1218 426 L1224 456 L1216 456 Z" fill="#c8d0d0" opacity="0.8"/><rect x="1236" y="412" width="2" height="40" fill="#303030" opacity="0.6"/><ellipse cx="1233" cy="423" rx="3.2" ry="4" fill="#b87860"/><path d="M1226 428 Q1234 426 1244 430 L1244 446 L1226 446 Z" fill="#c89078"/><rect x="1226" y="431" width="16" height="9" fill="#141414"/><rect x="1228" y="440" width="12" height="16" fill="#7888a0"/></g></g>
<circle cx="1178.5" cy="527.7" r="27.599999999999998" fill="#1a1a1a" stroke="none" stroke-width="1" opacity="0.6"/>
<g clip-path="url(#cl8)"><g filter="url(#avblur)"><rect x="1148.6" y="497.80000000000007" width="59.8" height="59.8" fill="url(#av8)"/><ellipse cx="1170" cy="508" rx="10" ry="4" fill="#f2f6fa" opacity="0.9"/><ellipse cx="1190" cy="514" rx="9" ry="3" fill="#e8f0f8" opacity="0.9"/><ellipse cx="1160" cy="516" rx="6" ry="2.5" fill="#e0eaf4"/><path d="M1193 530 L1208 528 L1208 544 L1195 541 Z" fill="#2a3236"/><path d="M1194 534 L1208 532 M1194 538 L1208 536" stroke="#c8d0d8" stroke-width="0.8"/><path d="M1168 531 Q1180 526 1192 531 L1194 550 L1170 550 Z" fill="#f4f4f6"/><path d="M1164 536 L1172 530 L1174 536 L1168 544 Z" fill="#eeeeF0"/><ellipse cx="1179" cy="519" rx="3.8" ry="4.8" fill="#d0a890"/><path d="M1175 516 Q1180 510 1186 515 L1189 530 L1182 520 Z" fill="#5a4232"/><rect x="1174" y="548" width="17" height="10" fill="#151515"/></g></g>
<circle cx="26.5" cy="697.6" r="7.2" fill="#f5a623" stroke="none" stroke-width="1" />
<path d="M19.6 709.6 H35.4 Q38.2 709.6 38 706.2 Q37.8 703 34.6 703 Q33.4 699.6 29.6 700.2 Q26.6 700.8 26 703.6 Q21.6 702.8 19.8 706 Q18.6 709.6 19.6 709.6 Z" fill="#dfe6f5"/>
<text x="42.5" y="696.8" font-size="9.8" fill="#ececec" font-weight="400" textLength="15.6" lengthAdjust="spacingAndGlyphs">7°C</text>
<text x="42.5" y="709.4" font-size="9.8" fill="#cfcfcf" font-weight="400" textLength="54.4" lengthAdjust="spacingAndGlyphs">Partly sunny</text>
<rect x="501.4" y="690.2" width="9.40" height="9.40" fill="url(#winlg)" rx="0.6" />
<rect x="511.6" y="690.2" width="9.40" height="9.40" fill="url(#winlg)" rx="0.6" />
<rect x="501.4" y="700.4" width="9.40" height="9.40" fill="url(#winlg)" rx="0.6" />
<rect x="511.6" y="700.4" width="9.40" height="9.40" fill="url(#winlg)" rx="0.6" />
<circle cx="548" cy="698.8" r="6.4" fill="none" stroke="#f0f0f0" stroke-width="2.2" />
<line x1="552.6" y1="703.4" x2="557.6" y2="708.4" stroke="#f0f0f0" stroke-width="2.6" stroke-linecap="round"/>
<rect x="575.8" y="695.4" width="13.60" height="13.20" fill="#5a5a5a" rx="1.5" />
<rect x="582" y="690.6" width="14.20" height="13.20" fill="#e8e8e8" rx="1.5" />
<rect x="582" y="695.4" width="7.40" height="8.40" fill="#a8a8a8" rx="0" />
<path d="M612.2 692 Q612.2 690.6 613.6 690.6 H619.8 L621.8 692.6 H631 Q632.4 692.6 632.4 694 V707.4 Q632.4 708.8 631 708.8 H613.6 Q612.2 708.8 612.2 707.4 Z" stroke="none" fill="#f7c948" stroke-width="1" />
<rect x="612.2" y="695.4" width="20.20" height="13.40" fill="#fcd462" rx="1" />
<rect x="616.6" y="702.8" width="11.40" height="4.80" fill="#1d6fc6" rx="0" />
<circle cx="659.1" cy="699.8" r="10.3" fill="#db4437" stroke="none" stroke-width="1" />
<path d="M659.1 699.8 L650.2 704.95 A10.3 10.3 0 0 0 659.1 710.1 Z" stroke="none" fill="#0f9d58" stroke-width="1" />
<path d="M650.2 704.95 A10.3 10.3 0 0 1 651.8 692.5 L656.4 700.4 Z" stroke="none" fill="#0f9d58" stroke-width="1" />
<path d="M659.1 710.1 A10.3 10.3 0 0 0 668 694.65 L663.6 702.4 Z" stroke="none" fill="#f4b400" stroke-width="1" />
<path d="M668 694.65 A10.3 10.3 0 0 1 669.4 699.8 L659.1 699.8 Z" stroke="none" fill="#f4b400" stroke-width="1" />
<circle cx="659.1" cy="699.8" r="4.6" fill="#ffffff" stroke="none" stroke-width="1" />
<circle cx="659.1" cy="699.8" r="3.6" fill="#4285f4" stroke="none" stroke-width="1" />
<rect x="656.3" y="713.2" width="5.70" height="1.80" fill="#9a9a9a" rx="0.8" />
<circle cx="695.4" cy="700" r="9.2" fill="#2ba3e0" stroke="none" stroke-width="1" />
<path d="M690.6 699.8 L700.2 695.6 L698.4 704.4 L695.8 702.4 L694 704 L694.2 701.4 Z" stroke="none" fill="#ffffff" stroke-width="1" />
<rect x="697.6" y="689.6" width="12.60" height="9.20" fill="#e03a3a" rx="2.5" />
<text x="699.6" y="697.2" font-size="7.6" fill="#ffffff" font-weight="400" textLength="8.6" lengthAdjust="spacingAndGlyphs">31</text>
<rect x="692.4" y="713.2" width="6.00" height="1.80" fill="#9a9a9a" rx="0.8" />
<rect x="721.4" y="689.6" width="21.60" height="20.40" fill="#c91e1e" rx="1" />
<path d="M731 690 L742.6 709.6 M742.6 690 L733.6 703" stroke="#ffffff" fill="none" stroke-width="2" />
<text x="723.2" y="700.6" font-size="4.6" fill="#ffffff" font-weight="700" textLength="8.2" lengthAdjust="spacingAndGlyphs">PDF</text>
<rect x="722.6" y="705.6" width="8.40" height="0.80" fill="#f0c0c0" rx="0" />
<rect x="722.4" y="713.2" width="6.00" height="1.80" fill="#9a9a9a" rx="0.8" />
<rect x="752.6" y="682.6" width="32.40" height="33.60" fill="#ffffff" rx="3" opacity="0.07"/>
<circle cx="774.6" cy="694.8" r="2.6" fill="#7b83eb" stroke="none" stroke-width="1" />
<rect x="770.6" y="697.6" width="7.80" height="9.60" fill="#5059c9" rx="2" />
<circle cx="767.8" cy="694" r="3.2" fill="#7b83eb" stroke="none" stroke-width="1" />
<rect x="762.4" y="697.6" width="12.40" height="11.80" fill="#7b83eb" rx="3" />
<rect x="758.2" y="699.2" width="8.60" height="8.60" fill="#4b53bc" rx="1" />
<path d="M760.2 701.4 H764.8 M762.5 701.4 V706" stroke="#ffffff" fill="none" stroke-width="1.2" />
<circle cx="777.2" cy="691.8" r="5.4" fill="#e3313a" stroke="none" stroke-width="1" />
<rect x="762" y="713.2" width="14.40" height="2.20" fill="#d6a6f2" rx="1.1" />
<path d="M1062 702.4 L1066.8 697 L1071.6 702.4" stroke="#f0f0f0" fill="none" stroke-width="1.4" />
<rect x="1080.3" y="683.4" width="26.30" height="32.90" fill="#ffffff" rx="3" opacity="0.08"/>
<path d="M1091.4 694 Q1091.4 692.8 1093.2 692.8 Q1095 692.8 1095 694 V699.6 Q1095 701.4 1093.2 701.4 Q1091.4 701.4 1091.4 699.6 Z" stroke="none" fill="#f0f0f0" stroke-width="1" />
<path d="M1088.6 699.2 Q1088.6 704.4 1093.2 704.4 Q1097.8 704.4 1097.8 699.2 M1093.2 704.4 V706.8" stroke="#f0f0f0" fill="none" stroke-width="1" />
<line x1="1086.8" y1="693.2" x2="1099.8" y2="706.8" stroke="#3a1a28" stroke-width="2.2" />
<line x1="1086.8" y1="693.2" x2="1099.8" y2="706.8" stroke="#f0f0f0" stroke-width="1" />
<text x="1116.0" y="704.2" font-size="9.8" fill="#ececec" font-weight="400" textLength="17.4" lengthAdjust="spacingAndGlyphs">РУС</text>
<path d="M1150 698.4 A10 10 0 0 1 1163.2 698.4 M1152.4 700.8 A6.4 6.4 0 0 1 1160.8 700.8 M1154.6 703 A3.2 3.2 0 0 1 1158.6 703" stroke="#f0f0f0" fill="none" stroke-width="1.2" />
<circle cx="1156.6" cy="704.6" r="0.9" fill="#f0f0f0" stroke="none" stroke-width="1" />
<path d="M1170.2 697.8 H1172.6 L1176.4 694.8 V705.2 L1172.6 702.2 H1170.2 Z" stroke="#f0f0f0" fill="none" stroke-width="1" />
<path d="M1178.4 697.6 Q1180 700 1178.4 702.4 M1180.6 695.6 Q1183.6 700 1180.6 704.4" stroke="#f0f0f0" fill="none" stroke-width="1" />
<rect x="1190.4" y="696.6" width="11.20" height="7.00" fill="none" rx="1.6" stroke="#f0f0f0" stroke-width="1"/>
<rect x="1192" y="698.2" width="8.00" height="3.80" fill="#f0f0f0" rx="0.5" />
<rect x="1201.8" y="698.8" width="1.40" height="2.60" fill="#f0f0f0" rx="0.4" />
<text x="1241.6" y="696.8" font-size="9.8" fill="#ececec" font-weight="400" textLength="22.4" lengthAdjust="spacingAndGlyphs">13:15</text>
<text x="1217.3" y="709.6" font-size="9.8" fill="#ececec" font-weight="400" textLength="46.7" lengthAdjust="spacingAndGlyphs">26.02.2026</text>
</svg>
</body></html>
